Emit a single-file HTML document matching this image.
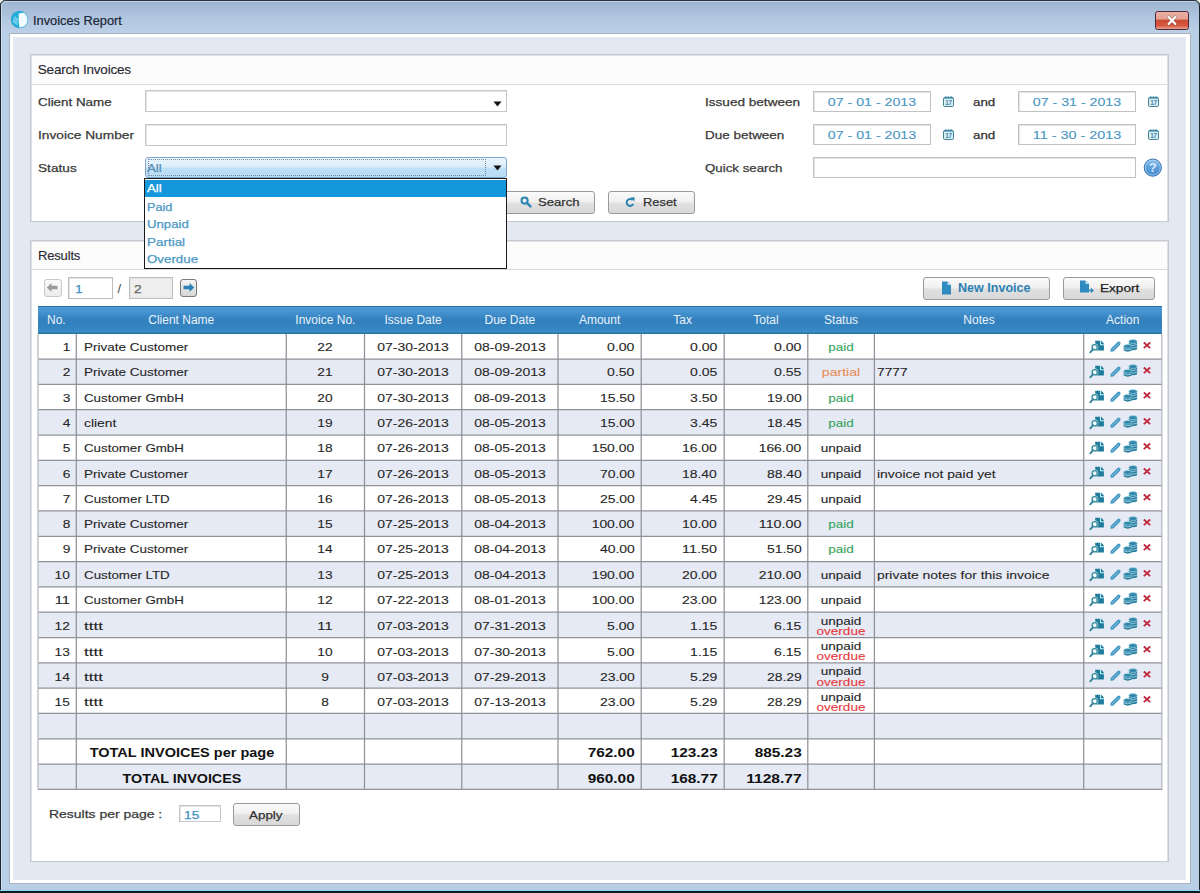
<!DOCTYPE html><html><head><meta charset="utf-8"><style>html,body{margin:0;padding:0;width:1200px;height:893px;overflow:hidden;background:#b9cfe6}body{position:relative;font-family:"Liberation Sans", sans-serif}</style></head><body><div style="position:absolute;left:0;top:0;width:1200px;height:893px;background:#b9cfe6"></div>
<div style="position:absolute;left:0px;top:0px;width:1200px;height:33px;background:linear-gradient(#9cb3cf,#b2c7e0 60%,#bcd0e8)"></div>
<div style="position:absolute;left:0px;top:0px;width:1200px;height:1px;background:#2a3440"></div>
<div style="position:absolute;left:0px;top:0px;width:1px;height:893px;background:#1a2630"></div>
<div style="position:absolute;left:1199px;top:0px;width:1px;height:893px;background:#1a2630"></div>
<div style="position:absolute;left:1px;top:1px;width:1198px;height:1px;background:#dfe8f2;opacity:.6"></div>
<div style="position:absolute;left:1px;top:1px;width:1px;height:891px;background:#dfe8f2;opacity:.6"></div>
<div style="position:absolute;left:0px;top:890px;width:1200px;height:1px;background:#88d5ef"></div>
<div style="position:absolute;left:0px;top:891px;width:1200px;height:2px;background:#0e1c22"></div>
<svg style="position:absolute;left:0;top:0" width="7" height="7" viewBox="0 0 7 7"><path d="M0 0 H5.5 A5.5 5.5 0 0 0 0 5.5Z" fill="#eeeee8"/><path d="M0.5 6 A5.5 5.5 0 0 1 6 0.5" fill="none" stroke="#33404a" stroke-width="1.1"/><path d="M1.6 6.5 A4.6 4.6 0 0 1 6.5 1.6" fill="none" stroke="#d8e2ec" stroke-width=".8"/></svg>
<svg style="position:absolute;left:1193px;top:0" width="7" height="7" viewBox="0 0 7 7"><path d="M7 0 H1.5 A5.5 5.5 0 0 1 7 5.5Z" fill="#eeeee8"/><path d="M1 0.5 A5.5 5.5 0 0 1 6.5 6" fill="none" stroke="#33404a" stroke-width="1.1"/></svg>
<div style="position:absolute;left:1155px;top:11px;width:32px;height:17px;border:1px solid #4a2a34;border-radius:2.5px;background:linear-gradient(#eab0a4,#e6a090 42%,#c94a30 48%,#d55a40 80%,#e9a090)"></div>
<svg style="position:absolute;left:1165px;top:14px" width="14" height="13" viewBox="0 0 14 13"><path d="M3.6 3 L10.4 10 M10.4 3 L3.6 10" stroke="#5a3030" stroke-width="3.4" stroke-linecap="round" opacity=".45"/><path d="M3.6 3 L10.4 10 M10.4 3 L3.6 10" stroke="#fff" stroke-width="2.4" stroke-linecap="round"/></svg>
<svg style="position:absolute;left:10px;top:10px" width="19" height="19" viewBox="0 0 19 19"><defs><clipPath id="ac"><circle cx="9.5" cy="9.5" r="8.1"/></clipPath></defs><circle cx="9.5" cy="9.5" r="8.7" fill="#26aad8"/><path clip-path="url(#ac)" d="M8.8 3.6 Q13 2.6 19 2.5 V19 H9.6 Q8.2 11 8.8 3.6Z" fill="#f2fbff"/><path d="M3.4 8.6 L7.8 12.6 M4.4 6.8 L8.2 10.4 M3.0 10.8 L7.2 14.6" stroke="#a5ecfd" stroke-width="1.2" opacity=".85"/></svg>
<div style="position:absolute;-webkit-text-stroke:0.2px #1b2636;top:14.56px;font-size:12.8px;line-height:12.8px;color:#1b2636;letter-spacing:0.000px;font-weight:normal;white-space:nowrap;left:33px;transform-origin:0 0">Invoices Report</div>
<div style="position:absolute;left:9px;top:33px;width:1182px;height:851px;background:#a9b2be"></div>
<div style="position:absolute;left:10px;top:34px;width:1180px;height:849px;background:#ffffff"></div>
<div style="position:absolute;left:13px;top:37px;width:1173px;height:843px;background:#e3e9f1"></div>
<div style="position:absolute;left:30px;top:54px;width:1139px;height:168px;background:#c6cacf"></div>
<div style="position:absolute;left:31px;top:55px;width:1137px;height:166px;background:#dde0e4"></div>
<div style="position:absolute;left:32px;top:56px;width:1135px;height:165px;background:#ffffff"></div>
<div style="position:absolute;left:32px;top:56px;width:1135px;height:28px;background:#fcfcfc"></div>
<div style="position:absolute;left:32px;top:84px;width:1135px;height:1px;background:#d9dcdf"></div>
<div style="position:absolute;left:30px;top:240px;width:1139px;height:622px;background:#c6cacf"></div>
<div style="position:absolute;left:31px;top:241px;width:1137px;height:620px;background:#dde0e4"></div>
<div style="position:absolute;left:32px;top:242px;width:1135px;height:619px;background:#ffffff"></div>
<div style="position:absolute;left:32px;top:242px;width:1135px;height:27px;background:#fcfcfc"></div>
<div style="position:absolute;left:32px;top:269px;width:1135px;height:1px;background:#d9dcdf"></div>
<div style="position:absolute;-webkit-text-stroke:0.15px #2a2a33;top:63.27px;font-size:13.5px;line-height:13.5px;color:#2a2a33;letter-spacing:-0.200px;font-weight:normal;white-space:nowrap;left:37.8px;transform-origin:0 0">Search Invoices</div>
<div style="position:absolute;-webkit-text-stroke:0.15px #2a2a33;top:248.80px;font-size:13px;line-height:13px;color:#2a2a33;letter-spacing:-0.150px;font-weight:normal;white-space:nowrap;left:37.9px;transform-origin:0 0">Results</div>
<div style="position:absolute;-webkit-text-stroke:0.25px #3a3a3a;top:97.07px;font-size:11.5px;line-height:11.5px;color:#3a3a3a;letter-spacing:0.000px;font-weight:normal;white-space:nowrap;transform:scaleX(1.1643);left:38px;transform-origin:0 0">Client Name</div>
<div style="position:absolute;-webkit-text-stroke:0.25px #3a3a3a;top:130.27px;font-size:11.5px;line-height:11.5px;color:#3a3a3a;letter-spacing:0.000px;font-weight:normal;white-space:nowrap;transform:scaleX(1.1914);left:38px;transform-origin:0 0">Invoice Number</div>
<div style="position:absolute;-webkit-text-stroke:0.25px #3a3a3a;top:162.87px;font-size:11.5px;line-height:11.5px;color:#3a3a3a;letter-spacing:0.000px;font-weight:normal;white-space:nowrap;transform:scaleX(1.1878);left:38px;transform-origin:0 0">Status</div>
<div style="position:absolute;left:145px;top:90px;width:360px;height:20px;border:1px solid #c6c6c6;background:#fff;box-shadow:inset 1px 1px 0 #e4e4e4"></div>
<svg style="position:absolute;left:492.5px;top:100.5px" width="9" height="6" viewBox="0 0 9 6"><path d="M0.5 0.5 H8.5 L4.5 5.5Z" fill="#111"/></svg>
<div style="position:absolute;left:145px;top:124px;width:360px;height:20px;border:1px solid #c6c6c6;background:#fff;box-shadow:inset 1px 1px 0 #e4e4e4"></div>
<div style="position:absolute;left:145px;top:157px;width:360px;height:19px;border:1px solid #7fa6cf;border-radius:3px;background:linear-gradient(#eaf5fd,#dcedfa 45%,#bfe0f6 55%,#b6dcf5)"></div>
<div style="position:absolute;left:148px;top:159px;width:336px;height:15px;border:1px dotted #6d8aa6"></div>
<svg style="position:absolute;left:493.0px;top:165.4px" width="9" height="6" viewBox="0 0 9 6"><path d="M0.5 0.5 H8.5 L4.5 5.5Z" fill="#111"/></svg>
<div style="position:absolute;-webkit-text-stroke:0.25px #5b8fb5;top:163.07px;font-size:11.5px;line-height:11.5px;color:#5b8fb5;letter-spacing:0.000px;font-weight:normal;white-space:nowrap;transform:scaleX(1.1568);left:147.3px;transform-origin:0 0">All</div>
<div style="position:absolute;-webkit-text-stroke:0.25px #3a3a3a;top:97.17px;font-size:11.5px;line-height:11.5px;color:#3a3a3a;letter-spacing:0.000px;font-weight:normal;white-space:nowrap;transform:scaleX(1.1802);left:705.4px;transform-origin:0 0">Issued between</div>
<div style="position:absolute;-webkit-text-stroke:0.25px #3a3a3a;top:130.47px;font-size:11.5px;line-height:11.5px;color:#3a3a3a;letter-spacing:0.000px;font-weight:normal;white-space:nowrap;transform:scaleX(1.1701);left:705.4px;transform-origin:0 0">Due between</div>
<div style="position:absolute;-webkit-text-stroke:0.25px #3a3a3a;top:163.47px;font-size:11.5px;line-height:11.5px;color:#3a3a3a;letter-spacing:0.000px;font-weight:normal;white-space:nowrap;transform:scaleX(1.1548);left:705.4px;transform-origin:0 0">Quick search</div>
<div style="position:absolute;left:813px;top:91px;width:116px;height:19px;border:1px solid #c2c2c2;background:#fff;box-shadow:inset 1px 1px 0 #e4e4e4"></div>
<div style="position:absolute;-webkit-text-stroke:0.1px #4796c2;top:97.47px;font-size:11.5px;line-height:11.5px;color:#4796c2;letter-spacing:0.000px;font-weight:normal;white-space:nowrap;transform:scaleX(1.2331);left:671.50px;width:400px;text-align:center;transform-origin:50% 0">07 - 01 - 2013</div>
<svg style="position:absolute;left:943px;top:96px" width="12" height="12" viewBox="0 0 12 12"><rect x="0.5" y="1.5" width="10" height="9" rx="1.2" fill="#d2f1fb" stroke="#4a7f8e" stroke-width="1"/><rect x="1" y="1" width="9" height="1.6" fill="#4a8aa2"/><circle cx="2.8" cy="1.2" r=".95" fill="#3e86a0"/><circle cx="5.5" cy="1.2" r=".95" fill="#3e86a0"/><circle cx="8.2" cy="1.2" r=".95" fill="#3e86a0"/><text x="5.6" y="9.2" font-size="6.4" font-family="Liberation Sans" font-weight="bold" fill="#52809f" text-anchor="middle" letter-spacing="-.3">17</text></svg>
<div style="position:absolute;-webkit-text-stroke:0.25px #333;top:97.27px;font-size:11.5px;line-height:11.5px;color:#333;letter-spacing:0.000px;font-weight:normal;white-space:nowrap;transform:scaleX(1.1614);left:973px;transform-origin:0 0">and</div>
<div style="position:absolute;left:1018px;top:91px;width:116px;height:19px;border:1px solid #c2c2c2;background:#fff;box-shadow:inset 1px 1px 0 #e4e4e4"></div>
<div style="position:absolute;-webkit-text-stroke:0.1px #4796c2;top:97.47px;font-size:11.5px;line-height:11.5px;color:#4796c2;letter-spacing:0.000px;font-weight:normal;white-space:nowrap;transform:scaleX(1.2331);left:876.50px;width:400px;text-align:center;transform-origin:50% 0">07 - 31 - 2013</div>
<svg style="position:absolute;left:1148px;top:96px" width="12" height="12" viewBox="0 0 12 12"><rect x="0.5" y="1.5" width="10" height="9" rx="1.2" fill="#d2f1fb" stroke="#4a7f8e" stroke-width="1"/><rect x="1" y="1" width="9" height="1.6" fill="#4a8aa2"/><circle cx="2.8" cy="1.2" r=".95" fill="#3e86a0"/><circle cx="5.5" cy="1.2" r=".95" fill="#3e86a0"/><circle cx="8.2" cy="1.2" r=".95" fill="#3e86a0"/><text x="5.6" y="9.2" font-size="6.4" font-family="Liberation Sans" font-weight="bold" fill="#52809f" text-anchor="middle" letter-spacing="-.3">17</text></svg>
<div style="position:absolute;left:813px;top:124px;width:116px;height:19px;border:1px solid #c2c2c2;background:#fff;box-shadow:inset 1px 1px 0 #e4e4e4"></div>
<div style="position:absolute;-webkit-text-stroke:0.1px #4796c2;top:130.47px;font-size:11.5px;line-height:11.5px;color:#4796c2;letter-spacing:0.000px;font-weight:normal;white-space:nowrap;transform:scaleX(1.2331);left:671.50px;width:400px;text-align:center;transform-origin:50% 0">07 - 01 - 2013</div>
<svg style="position:absolute;left:943px;top:129px" width="12" height="12" viewBox="0 0 12 12"><rect x="0.5" y="1.5" width="10" height="9" rx="1.2" fill="#d2f1fb" stroke="#4a7f8e" stroke-width="1"/><rect x="1" y="1" width="9" height="1.6" fill="#4a8aa2"/><circle cx="2.8" cy="1.2" r=".95" fill="#3e86a0"/><circle cx="5.5" cy="1.2" r=".95" fill="#3e86a0"/><circle cx="8.2" cy="1.2" r=".95" fill="#3e86a0"/><text x="5.6" y="9.2" font-size="6.4" font-family="Liberation Sans" font-weight="bold" fill="#52809f" text-anchor="middle" letter-spacing="-.3">17</text></svg>
<div style="position:absolute;-webkit-text-stroke:0.25px #333;top:130.17px;font-size:11.5px;line-height:11.5px;color:#333;letter-spacing:0.000px;font-weight:normal;white-space:nowrap;transform:scaleX(1.1614);left:973px;transform-origin:0 0">and</div>
<div style="position:absolute;left:1018px;top:124px;width:116px;height:19px;border:1px solid #c2c2c2;background:#fff;box-shadow:inset 1px 1px 0 #e4e4e4"></div>
<div style="position:absolute;-webkit-text-stroke:0.1px #4796c2;top:130.47px;font-size:11.5px;line-height:11.5px;color:#4796c2;letter-spacing:0.000px;font-weight:normal;white-space:nowrap;transform:scaleX(1.2480);left:876.50px;width:400px;text-align:center;transform-origin:50% 0">11 - 30 - 2013</div>
<svg style="position:absolute;left:1148px;top:129px" width="12" height="12" viewBox="0 0 12 12"><rect x="0.5" y="1.5" width="10" height="9" rx="1.2" fill="#d2f1fb" stroke="#4a7f8e" stroke-width="1"/><rect x="1" y="1" width="9" height="1.6" fill="#4a8aa2"/><circle cx="2.8" cy="1.2" r=".95" fill="#3e86a0"/><circle cx="5.5" cy="1.2" r=".95" fill="#3e86a0"/><circle cx="8.2" cy="1.2" r=".95" fill="#3e86a0"/><text x="5.6" y="9.2" font-size="6.4" font-family="Liberation Sans" font-weight="bold" fill="#52809f" text-anchor="middle" letter-spacing="-.3">17</text></svg>
<div style="position:absolute;left:813px;top:157px;width:321px;height:19px;border:1px solid #c2c2c2;background:#fff;box-shadow:inset 1px 1px 0 #e4e4e4"></div>
<svg style="position:absolute;left:1143px;top:157.8px" width="20" height="20" viewBox="0 0 20 20"><defs><linearGradient id="hg" x1="0" y1="0" x2="0" y2="1"><stop offset="0" stop-color="#8fc3ee"/><stop offset=".5" stop-color="#5c9fdb"/><stop offset="1" stop-color="#3f86cb"/></linearGradient></defs><circle cx="9.8" cy="9.6" r="8.6" fill="url(#hg)" stroke="#3a6eae" stroke-width="1"/><circle cx="9.8" cy="9.6" r="7.5" fill="none" stroke="#b5dbf6" stroke-width=".8" opacity=".85"/><text x="9.9" y="14.0" font-size="12.5" font-family="Liberation Sans" font-weight="bold" fill="#f6faff" stroke="#8fc0ea" stroke-width=".35" text-anchor="middle">?</text></svg>
<div style="position:absolute;left:504px;top:191px;width:89px;height:21px;border:1px solid #9a9a9a;border-radius:3px;background:linear-gradient(#fbfbfb,#f0f0f0 45%,#e0e0e0 55%,#d8d8d8)"></div>
<div style="position:absolute;left:608px;top:191px;width:85px;height:21px;border:1px solid #9a9a9a;border-radius:3px;background:linear-gradient(#fbfbfb,#f0f0f0 45%,#e0e0e0 55%,#d8d8d8)"></div>
<svg style="position:absolute;left:520px;top:196px" width="12" height="12" viewBox="0 0 12 12"><circle cx="4.6" cy="4.6" r="3.1" fill="none" stroke="#2a86b0" stroke-width="2"/><path d="M6.8 6.8 L10.4 10.4" stroke="#2a86b0" stroke-width="2.4" stroke-linecap="round"/></svg>
<div style="position:absolute;-webkit-text-stroke:0.25px #333;top:196.57px;font-size:11.5px;line-height:11.5px;color:#333;letter-spacing:0.000px;font-weight:normal;white-space:nowrap;transform:scaleX(1.1401);left:537.6px;transform-origin:0 0">Search</div>
<svg style="position:absolute;left:625px;top:196px" width="11" height="12" viewBox="0 0 11 12"><path d="M7.6 4.2 A3.4 3.4 0 1 0 8.2 7.8" fill="none" stroke="#2a86b0" stroke-width="2"/><path d="M5.4 1.6 L9.6 1.2 L9.4 5.6Z" fill="#2a86b0"/></svg>
<div style="position:absolute;-webkit-text-stroke:0.25px #333;top:196.57px;font-size:11.5px;line-height:11.5px;color:#333;letter-spacing:0.000px;font-weight:normal;white-space:nowrap;transform:scaleX(1.1192);left:642.6px;transform-origin:0 0">Reset</div>
<div style="position:absolute;left:44px;top:279px;width:16px;height:16px;border:1px solid #c8c8c8;border-radius:3px;background:linear-gradient(#fafafa,#ececec)"></div>
<svg style="position:absolute;left:46px;top:282px" width="13" height="11" viewBox="0 0 13 11"><path d="M0.8 5.5 L5.5 1 V3.8 H11.5 V7.2 H5.5 V10Z" fill="#9a9a9a"/></svg>
<div style="position:absolute;left:68px;top:277px;width:43px;height:20px;border:1px solid #bdbdbd;background:#fff;box-shadow:inset 1px 1px 0 #e4e4e4"></div>
<div style="position:absolute;-webkit-text-stroke:0.25px #3f91bf;top:283.57px;font-size:11.5px;line-height:11.5px;color:#3f91bf;letter-spacing:0.000px;font-weight:normal;white-space:nowrap;transform:scaleX(1.1933);left:74.5px;transform-origin:0 0">1</div>
<div style="position:absolute;-webkit-text-stroke:0px #444;top:281.50px;font-size:13px;line-height:13px;color:#444;letter-spacing:0.000px;font-weight:normal;white-space:nowrap;left:117.5px;transform-origin:0 0">/</div>
<div style="position:absolute;left:129px;top:277px;width:42px;height:20px;border:1px solid #bdbdbd;background:#eeeeee;box-shadow:inset 1px 1px 0 #e4e4e4"></div>
<div style="position:absolute;-webkit-text-stroke:0.25px #666;top:283.57px;font-size:11.5px;line-height:11.5px;color:#666;letter-spacing:0.000px;font-weight:normal;white-space:nowrap;transform:scaleX(1.1933);left:134px;transform-origin:0 0">2</div>
<div style="position:absolute;left:180px;top:279px;width:15px;height:16px;border:1px solid #7a7a7a;border-radius:3px;background:linear-gradient(#f4f4f4,#d6d6d6)"></div>
<svg style="position:absolute;left:182px;top:282px" width="13" height="11" viewBox="0 0 13 11"><path d="M12.2 5.5 L7.5 1 V3.8 H1.5 V7.2 H7.5 V10Z" fill="#2b80b6"/></svg>
<div style="position:absolute;left:923px;top:277px;width:125px;height:21px;border:1px solid #9a9a9a;border-radius:3px;background:linear-gradient(#fbfbfb,#f0f0f0 45%,#e0e0e0 55%,#d8d8d8)"></div>
<div style="position:absolute;left:1063px;top:277px;width:90px;height:21px;border:1px solid #9a9a9a;border-radius:3px;background:linear-gradient(#fbfbfb,#f0f0f0 45%,#e0e0e0 55%,#d8d8d8)"></div>
<svg style="position:absolute;left:941px;top:281px" width="11" height="14" viewBox="0 0 11 14"><path d="M1 0.5 H6.5 L10 4 V13.5 H1Z" fill="#2f8ac0"/><path d="M6.5 0.5 V4 H10" fill="#bfe0f2"/></svg>
<div style="position:absolute;-webkit-text-stroke:0px #2a80b4;top:282.14px;font-size:12px;line-height:12px;color:#2a80b4;letter-spacing:0.000px;font-weight:bold;white-space:nowrap;transform:scaleX(1.045);left:957.5px;transform-origin:0 0">New Invoice</div>
<svg style="position:absolute;left:1079px;top:280px" width="16" height="15" viewBox="0 0 16 15"><path d="M1 0.5 H6.5 L10 4 V12.5 H1Z" fill="#2f8ac0"/><path d="M6.5 0.5 V4 H10" fill="#bfe0f2"/><path d="M9 10.5 H13.5 M11.8 8.6 L14 10.5 L11.8 12.4" stroke="#2f8ac0" stroke-width="1.3" fill="none"/></svg>
<div style="position:absolute;-webkit-text-stroke:0.25px #222;top:282.57px;font-size:11.5px;line-height:11.5px;color:#222;letter-spacing:0.000px;font-weight:normal;white-space:nowrap;transform:scaleX(1.1824);left:1100px;transform-origin:0 0">Export</div>
<div style="position:absolute;left:38px;top:306px;width:1123.80px;height:28px;background:linear-gradient(#2d7099 0px,#2d7099 1px,#4b9ad5 1.5px,#4593d0 6px,#327fbc 14px,#3585c3 22px,#3a8ecb 26px,#2d7299 27px,#2d7299 28px)"></div>
<div style="position:absolute;-webkit-text-stroke:0px #e9f3fb;top:314.04px;font-size:12px;line-height:12px;color:#e9f3fb;letter-spacing:0.000px;font-weight:normal;white-space:nowrap;left:47.0px;transform-origin:0 0">No.</div>
<div style="position:absolute;-webkit-text-stroke:0px #e9f3fb;top:314.04px;font-size:12px;line-height:12px;color:#e9f3fb;letter-spacing:0.000px;font-weight:normal;white-space:nowrap;left:-18.72px;width:400px;text-align:center;transform-origin:50% 0">Client Name</div>
<div style="position:absolute;-webkit-text-stroke:0px #e9f3fb;top:314.04px;font-size:12px;line-height:12px;color:#e9f3fb;letter-spacing:0.000px;font-weight:normal;white-space:nowrap;left:125.38px;width:400px;text-align:center;transform-origin:50% 0">Invoice No.</div>
<div style="position:absolute;-webkit-text-stroke:0px #e9f3fb;top:314.04px;font-size:12px;line-height:12px;color:#e9f3fb;letter-spacing:0.000px;font-weight:normal;white-space:nowrap;left:213.12px;width:400px;text-align:center;transform-origin:50% 0">Issue Date</div>
<div style="position:absolute;-webkit-text-stroke:0px #e9f3fb;top:314.04px;font-size:12px;line-height:12px;color:#e9f3fb;letter-spacing:0.000px;font-weight:normal;white-space:nowrap;left:309.88px;width:400px;text-align:center;transform-origin:50% 0">Due Date</div>
<div style="position:absolute;-webkit-text-stroke:0px #e9f3fb;top:314.04px;font-size:12px;line-height:12px;color:#e9f3fb;letter-spacing:0.000px;font-weight:normal;white-space:nowrap;left:399.60px;width:400px;text-align:center;transform-origin:50% 0">Amount</div>
<div style="position:absolute;-webkit-text-stroke:0px #e9f3fb;top:314.04px;font-size:12px;line-height:12px;color:#e9f3fb;letter-spacing:0.000px;font-weight:normal;white-space:nowrap;left:482.70px;width:400px;text-align:center;transform-origin:50% 0">Tax</div>
<div style="position:absolute;-webkit-text-stroke:0px #e9f3fb;top:314.04px;font-size:12px;line-height:12px;color:#e9f3fb;letter-spacing:0.000px;font-weight:normal;white-space:nowrap;left:566.00px;width:400px;text-align:center;transform-origin:50% 0">Total</div>
<div style="position:absolute;-webkit-text-stroke:0px #e9f3fb;top:314.04px;font-size:12px;line-height:12px;color:#e9f3fb;letter-spacing:0.000px;font-weight:normal;white-space:nowrap;left:641.10px;width:400px;text-align:center;transform-origin:50% 0">Status</div>
<div style="position:absolute;-webkit-text-stroke:0px #e9f3fb;top:314.04px;font-size:12px;line-height:12px;color:#e9f3fb;letter-spacing:0.000px;font-weight:normal;white-space:nowrap;left:779.05px;width:400px;text-align:center;transform-origin:50% 0">Notes</div>
<div style="position:absolute;-webkit-text-stroke:0px #e9f3fb;top:314.04px;font-size:12px;line-height:12px;color:#e9f3fb;letter-spacing:0.000px;font-weight:normal;white-space:nowrap;left:922.75px;width:400px;text-align:center;transform-origin:50% 0">Action</div>
<div style="position:absolute;left:38px;top:333.80px;width:1123.80px;height:25.312px;background:#ffffff"></div>
<div style="position:absolute;left:38px;top:359.11px;width:1123.80px;height:25.312px;background:#e6eaf5"></div>
<div style="position:absolute;left:38px;top:384.43px;width:1123.80px;height:25.312px;background:#ffffff"></div>
<div style="position:absolute;left:38px;top:409.74px;width:1123.80px;height:25.312px;background:#e6eaf5"></div>
<div style="position:absolute;left:38px;top:435.05px;width:1123.80px;height:25.312px;background:#ffffff"></div>
<div style="position:absolute;left:38px;top:460.36px;width:1123.80px;height:25.312px;background:#e6eaf5"></div>
<div style="position:absolute;left:38px;top:485.68px;width:1123.80px;height:25.312px;background:#ffffff"></div>
<div style="position:absolute;left:38px;top:510.99px;width:1123.80px;height:25.312px;background:#e6eaf5"></div>
<div style="position:absolute;left:38px;top:536.30px;width:1123.80px;height:25.312px;background:#ffffff"></div>
<div style="position:absolute;left:38px;top:561.61px;width:1123.80px;height:25.312px;background:#e6eaf5"></div>
<div style="position:absolute;left:38px;top:586.92px;width:1123.80px;height:25.312px;background:#ffffff"></div>
<div style="position:absolute;left:38px;top:612.24px;width:1123.80px;height:25.312px;background:#e6eaf5"></div>
<div style="position:absolute;left:38px;top:637.55px;width:1123.80px;height:25.312px;background:#ffffff"></div>
<div style="position:absolute;left:38px;top:662.86px;width:1123.80px;height:25.312px;background:#e6eaf5"></div>
<div style="position:absolute;left:38px;top:688.17px;width:1123.80px;height:25.312px;background:#ffffff"></div>
<div style="position:absolute;left:38px;top:713.49px;width:1123.80px;height:25.312px;background:#e6eaf5"></div>
<div style="position:absolute;left:38px;top:738.80px;width:1123.80px;height:25.312px;background:#ffffff"></div>
<div style="position:absolute;left:38px;top:764.11px;width:1123.80px;height:25.312px;background:#e6eaf5"></div>
<svg style="position:absolute;left:0;top:0" width="1200" height="893" viewBox="0 0 1200 893"><line x1="38" y1="359.113" x2="1162.3" y2="359.113" stroke="#909298" stroke-width="1.25"/><line x1="38" y1="384.425" x2="1162.3" y2="384.425" stroke="#909298" stroke-width="1.25"/><line x1="38" y1="409.738" x2="1162.3" y2="409.738" stroke="#909298" stroke-width="1.25"/><line x1="38" y1="435.050" x2="1162.3" y2="435.050" stroke="#909298" stroke-width="1.25"/><line x1="38" y1="460.363" x2="1162.3" y2="460.363" stroke="#909298" stroke-width="1.25"/><line x1="38" y1="485.675" x2="1162.3" y2="485.675" stroke="#909298" stroke-width="1.25"/><line x1="38" y1="510.988" x2="1162.3" y2="510.988" stroke="#909298" stroke-width="1.25"/><line x1="38" y1="536.300" x2="1162.3" y2="536.300" stroke="#909298" stroke-width="1.25"/><line x1="38" y1="561.612" x2="1162.3" y2="561.612" stroke="#909298" stroke-width="1.25"/><line x1="38" y1="586.925" x2="1162.3" y2="586.925" stroke="#909298" stroke-width="1.25"/><line x1="38" y1="612.237" x2="1162.3" y2="612.237" stroke="#909298" stroke-width="1.25"/><line x1="38" y1="637.550" x2="1162.3" y2="637.550" stroke="#909298" stroke-width="1.25"/><line x1="38" y1="662.862" x2="1162.3" y2="662.862" stroke="#909298" stroke-width="1.25"/><line x1="38" y1="688.175" x2="1162.3" y2="688.175" stroke="#909298" stroke-width="1.25"/><line x1="38" y1="713.487" x2="1162.3" y2="713.487" stroke="#909298" stroke-width="1.25"/><line x1="38" y1="738.800" x2="1162.3" y2="738.800" stroke="#909298" stroke-width="1.25"/><line x1="38" y1="764.112" x2="1162.3" y2="764.112" stroke="#909298" stroke-width="1.25"/><line x1="38" y1="789.425" x2="1162.3" y2="789.425" stroke="#909298" stroke-width="1.25"/><line x1="38.000" y1="333.8" x2="38.000" y2="789.425" stroke="#b4b8be" stroke-width="1.25"/><line x1="76.300" y1="333.8" x2="76.300" y2="789.425" stroke="#909298" stroke-width="1.25"/><line x1="286.250" y1="333.8" x2="286.250" y2="789.425" stroke="#909298" stroke-width="1.25"/><line x1="364.500" y1="333.8" x2="364.500" y2="789.425" stroke="#909298" stroke-width="1.25"/><line x1="461.750" y1="333.8" x2="461.750" y2="789.425" stroke="#909298" stroke-width="1.25"/><line x1="558.000" y1="333.8" x2="558.000" y2="789.425" stroke="#909298" stroke-width="1.25"/><line x1="641.200" y1="333.8" x2="641.200" y2="789.425" stroke="#909298" stroke-width="1.25"/><line x1="724.200" y1="333.8" x2="724.200" y2="789.425" stroke="#909298" stroke-width="1.25"/><line x1="807.800" y1="333.8" x2="807.800" y2="789.425" stroke="#909298" stroke-width="1.25"/><line x1="874.400" y1="333.8" x2="874.400" y2="789.425" stroke="#909298" stroke-width="1.25"/><line x1="1083.700" y1="333.8" x2="1083.700" y2="789.425" stroke="#909298" stroke-width="1.25"/><line x1="1161.800" y1="333.8" x2="1161.800" y2="789.425" stroke="#b4b8be" stroke-width="1.25"/></svg>
<div style="position:absolute;-webkit-text-stroke:0.1px #262626;top:341.97px;font-size:11.5px;line-height:11.5px;color:#262626;letter-spacing:0.000px;font-weight:normal;white-space:nowrap;transform:scaleX(1.1933);right:1130.00px;transform-origin:100% 0">1</div>
<div style="position:absolute;-webkit-text-stroke:0.1px #262626;top:341.97px;font-size:11.5px;line-height:11.5px;color:#262626;letter-spacing:0.000px;font-weight:normal;white-space:nowrap;transform:scaleX(1.1736);left:83.7px;transform-origin:0 0">Private Customer</div>
<div style="position:absolute;-webkit-text-stroke:0.1px #262626;top:341.97px;font-size:11.5px;line-height:11.5px;color:#262626;letter-spacing:0.000px;font-weight:normal;white-space:nowrap;transform:scaleX(1.1933);left:125.38px;width:400px;text-align:center;transform-origin:50% 0">22</div>
<div style="position:absolute;-webkit-text-stroke:0.1px #262626;top:341.97px;font-size:11.5px;line-height:11.5px;color:#262626;letter-spacing:0.000px;font-weight:normal;white-space:nowrap;transform:scaleX(1.2138);left:213.12px;width:400px;text-align:center;transform-origin:50% 0">07-30-2013</div>
<div style="position:absolute;-webkit-text-stroke:0.1px #262626;top:341.97px;font-size:11.5px;line-height:11.5px;color:#262626;letter-spacing:0.000px;font-weight:normal;white-space:nowrap;transform:scaleX(1.2138);left:309.88px;width:400px;text-align:center;transform-origin:50% 0">08-09-2013</div>
<div style="position:absolute;-webkit-text-stroke:0.1px #262626;top:341.97px;font-size:11.5px;line-height:11.5px;color:#262626;letter-spacing:0.000px;font-weight:normal;white-space:nowrap;transform:scaleX(1.2181);right:565.60px;transform-origin:100% 0">0.00</div>
<div style="position:absolute;-webkit-text-stroke:0.1px #262626;top:341.97px;font-size:11.5px;line-height:11.5px;color:#262626;letter-spacing:0.000px;font-weight:normal;white-space:nowrap;transform:scaleX(1.2181);right:482.80px;transform-origin:100% 0">0.00</div>
<div style="position:absolute;-webkit-text-stroke:0.1px #262626;top:341.97px;font-size:11.5px;line-height:11.5px;color:#262626;letter-spacing:0.000px;font-weight:normal;white-space:nowrap;transform:scaleX(1.2181);right:398.50px;transform-origin:100% 0">0.00</div>
<div style="position:absolute;-webkit-text-stroke:0.1px #33a35a;top:341.97px;font-size:11.5px;line-height:11.5px;color:#33a35a;letter-spacing:0.000px;font-weight:normal;white-space:nowrap;transform:scaleX(1.1706);left:641.10px;width:400px;text-align:center;transform-origin:50% 0">paid</div>
<svg style="position:absolute;left:1085px;top:333.800px" width="70" height="25" viewBox="0 0 70 25"><path d="M10.2 6.8 H16.2 L18.9 9.5 V16.6 H10.2Z" fill="#1f7b9a"/><path d="M15.5 6.6 V10.8 H19.2" stroke="#c4eef9" stroke-width="1.05" fill="none"/><circle cx="9.7" cy="13.2" r="3.6" fill="#d8f4fb"/><circle cx="9.7" cy="13.2" r="2.6" fill="#f4fbfd" stroke="#3b8a9c" stroke-width="1.3"/><path d="M7.9 15.3 L5.3 18.4" stroke="#2f7f96" stroke-width="1.8" stroke-linecap="round"/><path d="M25.3 17.8 L25.8 14.8 L32.4 8.2 Q33.8 7 35.0 8.3 Q36.1 9.6 34.9 10.9 L28.3 17.4Z" fill="#4296c2"/><path d="M27 16.2 L33.8 9.4" stroke="#9fd3ea" stroke-width=".8"/><path d="M43.9 7.8 V15.3 Q48 17.3 52.1 15.3 V7.8Z" fill="#2a7b9c"/><path d="M43.9 10.6 Q48 12.4 52.1 10.6 M43.9 13.2 Q48 15 52.1 13.2" stroke="#a6dcee" stroke-width=".8" fill="none"/><ellipse cx="48" cy="7.6" rx="4.1" ry="2" fill="#2f86a8" stroke="#a6dcee" stroke-width=".6"/><path d="M38.7 12.4 V16.6 Q42.7 18.8 46.8 16.6 V12.4Z" fill="#2a7b9c"/><path d="M38.7 14.8 Q42.7 16.8 46.8 14.8" stroke="#a6dcee" stroke-width=".8" fill="none"/><ellipse cx="42.75" cy="12.3" rx="4.1" ry="1.9" fill="#2f86a8" stroke="#a6dcee" stroke-width=".6"/><path d="M58.8 8.5 L65.2 14.2 M65.2 8.5 L58.8 14.2" stroke="#c0283e" stroke-width="1.8"/></svg>
<div style="position:absolute;-webkit-text-stroke:0.1px #262626;top:367.28px;font-size:11.5px;line-height:11.5px;color:#262626;letter-spacing:0.000px;font-weight:normal;white-space:nowrap;transform:scaleX(1.1933);right:1130.00px;transform-origin:100% 0">2</div>
<div style="position:absolute;-webkit-text-stroke:0.1px #262626;top:367.28px;font-size:11.5px;line-height:11.5px;color:#262626;letter-spacing:0.000px;font-weight:normal;white-space:nowrap;transform:scaleX(1.1736);left:83.7px;transform-origin:0 0">Private Customer</div>
<div style="position:absolute;-webkit-text-stroke:0.1px #262626;top:367.28px;font-size:11.5px;line-height:11.5px;color:#262626;letter-spacing:0.000px;font-weight:normal;white-space:nowrap;transform:scaleX(1.1933);left:125.38px;width:400px;text-align:center;transform-origin:50% 0">21</div>
<div style="position:absolute;-webkit-text-stroke:0.1px #262626;top:367.28px;font-size:11.5px;line-height:11.5px;color:#262626;letter-spacing:0.000px;font-weight:normal;white-space:nowrap;transform:scaleX(1.2138);left:213.12px;width:400px;text-align:center;transform-origin:50% 0">07-30-2013</div>
<div style="position:absolute;-webkit-text-stroke:0.1px #262626;top:367.28px;font-size:11.5px;line-height:11.5px;color:#262626;letter-spacing:0.000px;font-weight:normal;white-space:nowrap;transform:scaleX(1.2138);left:309.88px;width:400px;text-align:center;transform-origin:50% 0">08-09-2013</div>
<div style="position:absolute;-webkit-text-stroke:0.1px #262626;top:367.28px;font-size:11.5px;line-height:11.5px;color:#262626;letter-spacing:0.000px;font-weight:normal;white-space:nowrap;transform:scaleX(1.2181);right:565.60px;transform-origin:100% 0">0.50</div>
<div style="position:absolute;-webkit-text-stroke:0.1px #262626;top:367.28px;font-size:11.5px;line-height:11.5px;color:#262626;letter-spacing:0.000px;font-weight:normal;white-space:nowrap;transform:scaleX(1.2181);right:482.80px;transform-origin:100% 0">0.05</div>
<div style="position:absolute;-webkit-text-stroke:0.1px #262626;top:367.28px;font-size:11.5px;line-height:11.5px;color:#262626;letter-spacing:0.000px;font-weight:normal;white-space:nowrap;transform:scaleX(1.2181);right:398.50px;transform-origin:100% 0">0.55</div>
<div style="position:absolute;-webkit-text-stroke:0.1px #e98c55;top:367.28px;font-size:11.5px;line-height:11.5px;color:#e98c55;letter-spacing:0.000px;font-weight:normal;white-space:nowrap;transform:scaleX(1.2237);left:641.10px;width:400px;text-align:center;transform-origin:50% 0">partial</div>
<div style="position:absolute;-webkit-text-stroke:0.1px #262626;top:367.28px;font-size:11.5px;line-height:11.5px;color:#262626;letter-spacing:0.000px;font-weight:normal;white-space:nowrap;transform:scaleX(1.1933);left:877.3px;transform-origin:0 0">7777</div>
<svg style="position:absolute;left:1085px;top:359.113px" width="70" height="25" viewBox="0 0 70 25"><path d="M10.2 6.8 H16.2 L18.9 9.5 V16.6 H10.2Z" fill="#1f7b9a"/><path d="M15.5 6.6 V10.8 H19.2" stroke="#c4eef9" stroke-width="1.05" fill="none"/><circle cx="9.7" cy="13.2" r="3.6" fill="#d8f4fb"/><circle cx="9.7" cy="13.2" r="2.6" fill="#f4fbfd" stroke="#3b8a9c" stroke-width="1.3"/><path d="M7.9 15.3 L5.3 18.4" stroke="#2f7f96" stroke-width="1.8" stroke-linecap="round"/><path d="M25.3 17.8 L25.8 14.8 L32.4 8.2 Q33.8 7 35.0 8.3 Q36.1 9.6 34.9 10.9 L28.3 17.4Z" fill="#4296c2"/><path d="M27 16.2 L33.8 9.4" stroke="#9fd3ea" stroke-width=".8"/><path d="M43.9 7.8 V15.3 Q48 17.3 52.1 15.3 V7.8Z" fill="#2a7b9c"/><path d="M43.9 10.6 Q48 12.4 52.1 10.6 M43.9 13.2 Q48 15 52.1 13.2" stroke="#a6dcee" stroke-width=".8" fill="none"/><ellipse cx="48" cy="7.6" rx="4.1" ry="2" fill="#2f86a8" stroke="#a6dcee" stroke-width=".6"/><path d="M38.7 12.4 V16.6 Q42.7 18.8 46.8 16.6 V12.4Z" fill="#2a7b9c"/><path d="M38.7 14.8 Q42.7 16.8 46.8 14.8" stroke="#a6dcee" stroke-width=".8" fill="none"/><ellipse cx="42.75" cy="12.3" rx="4.1" ry="1.9" fill="#2f86a8" stroke="#a6dcee" stroke-width=".6"/><path d="M58.8 8.5 L65.2 14.2 M65.2 8.5 L58.8 14.2" stroke="#c0283e" stroke-width="1.8"/></svg>
<div style="position:absolute;-webkit-text-stroke:0.1px #262626;top:392.59px;font-size:11.5px;line-height:11.5px;color:#262626;letter-spacing:0.000px;font-weight:normal;white-space:nowrap;transform:scaleX(1.1933);right:1130.00px;transform-origin:100% 0">3</div>
<div style="position:absolute;-webkit-text-stroke:0.1px #262626;top:392.59px;font-size:11.5px;line-height:11.5px;color:#262626;letter-spacing:0.000px;font-weight:normal;white-space:nowrap;transform:scaleX(1.1578);left:83.7px;transform-origin:0 0">Customer GmbH</div>
<div style="position:absolute;-webkit-text-stroke:0.1px #262626;top:392.59px;font-size:11.5px;line-height:11.5px;color:#262626;letter-spacing:0.000px;font-weight:normal;white-space:nowrap;transform:scaleX(1.1933);left:125.38px;width:400px;text-align:center;transform-origin:50% 0">20</div>
<div style="position:absolute;-webkit-text-stroke:0.1px #262626;top:392.59px;font-size:11.5px;line-height:11.5px;color:#262626;letter-spacing:0.000px;font-weight:normal;white-space:nowrap;transform:scaleX(1.2138);left:213.12px;width:400px;text-align:center;transform-origin:50% 0">07-30-2013</div>
<div style="position:absolute;-webkit-text-stroke:0.1px #262626;top:392.59px;font-size:11.5px;line-height:11.5px;color:#262626;letter-spacing:0.000px;font-weight:normal;white-space:nowrap;transform:scaleX(1.2138);left:309.88px;width:400px;text-align:center;transform-origin:50% 0">08-09-2013</div>
<div style="position:absolute;-webkit-text-stroke:0.1px #262626;top:392.59px;font-size:11.5px;line-height:11.5px;color:#262626;letter-spacing:0.000px;font-weight:normal;white-space:nowrap;transform:scaleX(1.2126);right:565.60px;transform-origin:100% 0">15.50</div>
<div style="position:absolute;-webkit-text-stroke:0.1px #262626;top:392.59px;font-size:11.5px;line-height:11.5px;color:#262626;letter-spacing:0.000px;font-weight:normal;white-space:nowrap;transform:scaleX(1.2181);right:482.80px;transform-origin:100% 0">3.50</div>
<div style="position:absolute;-webkit-text-stroke:0.1px #262626;top:392.59px;font-size:11.5px;line-height:11.5px;color:#262626;letter-spacing:0.000px;font-weight:normal;white-space:nowrap;transform:scaleX(1.2126);right:398.50px;transform-origin:100% 0">19.00</div>
<div style="position:absolute;-webkit-text-stroke:0.1px #33a35a;top:392.59px;font-size:11.5px;line-height:11.5px;color:#33a35a;letter-spacing:0.000px;font-weight:normal;white-space:nowrap;transform:scaleX(1.1706);left:641.10px;width:400px;text-align:center;transform-origin:50% 0">paid</div>
<svg style="position:absolute;left:1085px;top:384.425px" width="70" height="25" viewBox="0 0 70 25"><path d="M10.2 6.8 H16.2 L18.9 9.5 V16.6 H10.2Z" fill="#1f7b9a"/><path d="M15.5 6.6 V10.8 H19.2" stroke="#c4eef9" stroke-width="1.05" fill="none"/><circle cx="9.7" cy="13.2" r="3.6" fill="#d8f4fb"/><circle cx="9.7" cy="13.2" r="2.6" fill="#f4fbfd" stroke="#3b8a9c" stroke-width="1.3"/><path d="M7.9 15.3 L5.3 18.4" stroke="#2f7f96" stroke-width="1.8" stroke-linecap="round"/><path d="M25.3 17.8 L25.8 14.8 L32.4 8.2 Q33.8 7 35.0 8.3 Q36.1 9.6 34.9 10.9 L28.3 17.4Z" fill="#4296c2"/><path d="M27 16.2 L33.8 9.4" stroke="#9fd3ea" stroke-width=".8"/><path d="M43.9 7.8 V15.3 Q48 17.3 52.1 15.3 V7.8Z" fill="#2a7b9c"/><path d="M43.9 10.6 Q48 12.4 52.1 10.6 M43.9 13.2 Q48 15 52.1 13.2" stroke="#a6dcee" stroke-width=".8" fill="none"/><ellipse cx="48" cy="7.6" rx="4.1" ry="2" fill="#2f86a8" stroke="#a6dcee" stroke-width=".6"/><path d="M38.7 12.4 V16.6 Q42.7 18.8 46.8 16.6 V12.4Z" fill="#2a7b9c"/><path d="M38.7 14.8 Q42.7 16.8 46.8 14.8" stroke="#a6dcee" stroke-width=".8" fill="none"/><ellipse cx="42.75" cy="12.3" rx="4.1" ry="1.9" fill="#2f86a8" stroke="#a6dcee" stroke-width=".6"/><path d="M58.8 8.5 L65.2 14.2 M65.2 8.5 L58.8 14.2" stroke="#c0283e" stroke-width="1.8"/></svg>
<div style="position:absolute;-webkit-text-stroke:0.1px #262626;top:417.90px;font-size:11.5px;line-height:11.5px;color:#262626;letter-spacing:0.000px;font-weight:normal;white-space:nowrap;transform:scaleX(1.1933);right:1130.00px;transform-origin:100% 0">4</div>
<div style="position:absolute;-webkit-text-stroke:0.1px #262626;top:417.90px;font-size:11.5px;line-height:11.5px;color:#262626;letter-spacing:0.000px;font-weight:normal;white-space:nowrap;transform:scaleX(1.2033);left:83.7px;transform-origin:0 0">client</div>
<div style="position:absolute;-webkit-text-stroke:0.1px #262626;top:417.90px;font-size:11.5px;line-height:11.5px;color:#262626;letter-spacing:0.000px;font-weight:normal;white-space:nowrap;transform:scaleX(1.1933);left:125.38px;width:400px;text-align:center;transform-origin:50% 0">19</div>
<div style="position:absolute;-webkit-text-stroke:0.1px #262626;top:417.90px;font-size:11.5px;line-height:11.5px;color:#262626;letter-spacing:0.000px;font-weight:normal;white-space:nowrap;transform:scaleX(1.2138);left:213.12px;width:400px;text-align:center;transform-origin:50% 0">07-26-2013</div>
<div style="position:absolute;-webkit-text-stroke:0.1px #262626;top:417.90px;font-size:11.5px;line-height:11.5px;color:#262626;letter-spacing:0.000px;font-weight:normal;white-space:nowrap;transform:scaleX(1.2138);left:309.88px;width:400px;text-align:center;transform-origin:50% 0">08-05-2013</div>
<div style="position:absolute;-webkit-text-stroke:0.1px #262626;top:417.90px;font-size:11.5px;line-height:11.5px;color:#262626;letter-spacing:0.000px;font-weight:normal;white-space:nowrap;transform:scaleX(1.2126);right:565.60px;transform-origin:100% 0">15.00</div>
<div style="position:absolute;-webkit-text-stroke:0.1px #262626;top:417.90px;font-size:11.5px;line-height:11.5px;color:#262626;letter-spacing:0.000px;font-weight:normal;white-space:nowrap;transform:scaleX(1.2181);right:482.80px;transform-origin:100% 0">3.45</div>
<div style="position:absolute;-webkit-text-stroke:0.1px #262626;top:417.90px;font-size:11.5px;line-height:11.5px;color:#262626;letter-spacing:0.000px;font-weight:normal;white-space:nowrap;transform:scaleX(1.2126);right:398.50px;transform-origin:100% 0">18.45</div>
<div style="position:absolute;-webkit-text-stroke:0.1px #33a35a;top:417.90px;font-size:11.5px;line-height:11.5px;color:#33a35a;letter-spacing:0.000px;font-weight:normal;white-space:nowrap;transform:scaleX(1.1706);left:641.10px;width:400px;text-align:center;transform-origin:50% 0">paid</div>
<svg style="position:absolute;left:1085px;top:409.738px" width="70" height="25" viewBox="0 0 70 25"><path d="M10.2 6.8 H16.2 L18.9 9.5 V16.6 H10.2Z" fill="#1f7b9a"/><path d="M15.5 6.6 V10.8 H19.2" stroke="#c4eef9" stroke-width="1.05" fill="none"/><circle cx="9.7" cy="13.2" r="3.6" fill="#d8f4fb"/><circle cx="9.7" cy="13.2" r="2.6" fill="#f4fbfd" stroke="#3b8a9c" stroke-width="1.3"/><path d="M7.9 15.3 L5.3 18.4" stroke="#2f7f96" stroke-width="1.8" stroke-linecap="round"/><path d="M25.3 17.8 L25.8 14.8 L32.4 8.2 Q33.8 7 35.0 8.3 Q36.1 9.6 34.9 10.9 L28.3 17.4Z" fill="#4296c2"/><path d="M27 16.2 L33.8 9.4" stroke="#9fd3ea" stroke-width=".8"/><path d="M43.9 7.8 V15.3 Q48 17.3 52.1 15.3 V7.8Z" fill="#2a7b9c"/><path d="M43.9 10.6 Q48 12.4 52.1 10.6 M43.9 13.2 Q48 15 52.1 13.2" stroke="#a6dcee" stroke-width=".8" fill="none"/><ellipse cx="48" cy="7.6" rx="4.1" ry="2" fill="#2f86a8" stroke="#a6dcee" stroke-width=".6"/><path d="M38.7 12.4 V16.6 Q42.7 18.8 46.8 16.6 V12.4Z" fill="#2a7b9c"/><path d="M38.7 14.8 Q42.7 16.8 46.8 14.8" stroke="#a6dcee" stroke-width=".8" fill="none"/><ellipse cx="42.75" cy="12.3" rx="4.1" ry="1.9" fill="#2f86a8" stroke="#a6dcee" stroke-width=".6"/><path d="M58.8 8.5 L65.2 14.2 M65.2 8.5 L58.8 14.2" stroke="#c0283e" stroke-width="1.8"/></svg>
<div style="position:absolute;-webkit-text-stroke:0.1px #262626;top:443.22px;font-size:11.5px;line-height:11.5px;color:#262626;letter-spacing:0.000px;font-weight:normal;white-space:nowrap;transform:scaleX(1.1933);right:1130.00px;transform-origin:100% 0">5</div>
<div style="position:absolute;-webkit-text-stroke:0.1px #262626;top:443.22px;font-size:11.5px;line-height:11.5px;color:#262626;letter-spacing:0.000px;font-weight:normal;white-space:nowrap;transform:scaleX(1.1578);left:83.7px;transform-origin:0 0">Customer GmbH</div>
<div style="position:absolute;-webkit-text-stroke:0.1px #262626;top:443.22px;font-size:11.5px;line-height:11.5px;color:#262626;letter-spacing:0.000px;font-weight:normal;white-space:nowrap;transform:scaleX(1.1933);left:125.38px;width:400px;text-align:center;transform-origin:50% 0">18</div>
<div style="position:absolute;-webkit-text-stroke:0.1px #262626;top:443.22px;font-size:11.5px;line-height:11.5px;color:#262626;letter-spacing:0.000px;font-weight:normal;white-space:nowrap;transform:scaleX(1.2138);left:213.12px;width:400px;text-align:center;transform-origin:50% 0">07-26-2013</div>
<div style="position:absolute;-webkit-text-stroke:0.1px #262626;top:443.22px;font-size:11.5px;line-height:11.5px;color:#262626;letter-spacing:0.000px;font-weight:normal;white-space:nowrap;transform:scaleX(1.2138);left:309.88px;width:400px;text-align:center;transform-origin:50% 0">08-05-2013</div>
<div style="position:absolute;-webkit-text-stroke:0.1px #262626;top:443.22px;font-size:11.5px;line-height:11.5px;color:#262626;letter-spacing:0.000px;font-weight:normal;white-space:nowrap;transform:scaleX(1.2091);right:565.60px;transform-origin:100% 0">150.00</div>
<div style="position:absolute;-webkit-text-stroke:0.1px #262626;top:443.22px;font-size:11.5px;line-height:11.5px;color:#262626;letter-spacing:0.000px;font-weight:normal;white-space:nowrap;transform:scaleX(1.2126);right:482.80px;transform-origin:100% 0">16.00</div>
<div style="position:absolute;-webkit-text-stroke:0.1px #262626;top:443.22px;font-size:11.5px;line-height:11.5px;color:#262626;letter-spacing:0.000px;font-weight:normal;white-space:nowrap;transform:scaleX(1.2091);right:398.50px;transform-origin:100% 0">166.00</div>
<div style="position:absolute;-webkit-text-stroke:0.1px #262626;top:443.22px;font-size:11.5px;line-height:11.5px;color:#262626;letter-spacing:0.000px;font-weight:normal;white-space:nowrap;transform:scaleX(1.1769);left:641.10px;width:400px;text-align:center;transform-origin:50% 0">unpaid</div>
<svg style="position:absolute;left:1085px;top:435.050px" width="70" height="25" viewBox="0 0 70 25"><path d="M10.2 6.8 H16.2 L18.9 9.5 V16.6 H10.2Z" fill="#1f7b9a"/><path d="M15.5 6.6 V10.8 H19.2" stroke="#c4eef9" stroke-width="1.05" fill="none"/><circle cx="9.7" cy="13.2" r="3.6" fill="#d8f4fb"/><circle cx="9.7" cy="13.2" r="2.6" fill="#f4fbfd" stroke="#3b8a9c" stroke-width="1.3"/><path d="M7.9 15.3 L5.3 18.4" stroke="#2f7f96" stroke-width="1.8" stroke-linecap="round"/><path d="M25.3 17.8 L25.8 14.8 L32.4 8.2 Q33.8 7 35.0 8.3 Q36.1 9.6 34.9 10.9 L28.3 17.4Z" fill="#4296c2"/><path d="M27 16.2 L33.8 9.4" stroke="#9fd3ea" stroke-width=".8"/><path d="M43.9 7.8 V15.3 Q48 17.3 52.1 15.3 V7.8Z" fill="#2a7b9c"/><path d="M43.9 10.6 Q48 12.4 52.1 10.6 M43.9 13.2 Q48 15 52.1 13.2" stroke="#a6dcee" stroke-width=".8" fill="none"/><ellipse cx="48" cy="7.6" rx="4.1" ry="2" fill="#2f86a8" stroke="#a6dcee" stroke-width=".6"/><path d="M38.7 12.4 V16.6 Q42.7 18.8 46.8 16.6 V12.4Z" fill="#2a7b9c"/><path d="M38.7 14.8 Q42.7 16.8 46.8 14.8" stroke="#a6dcee" stroke-width=".8" fill="none"/><ellipse cx="42.75" cy="12.3" rx="4.1" ry="1.9" fill="#2f86a8" stroke="#a6dcee" stroke-width=".6"/><path d="M58.8 8.5 L65.2 14.2 M65.2 8.5 L58.8 14.2" stroke="#c0283e" stroke-width="1.8"/></svg>
<div style="position:absolute;-webkit-text-stroke:0.1px #262626;top:468.53px;font-size:11.5px;line-height:11.5px;color:#262626;letter-spacing:0.000px;font-weight:normal;white-space:nowrap;transform:scaleX(1.1933);right:1130.00px;transform-origin:100% 0">6</div>
<div style="position:absolute;-webkit-text-stroke:0.1px #262626;top:468.53px;font-size:11.5px;line-height:11.5px;color:#262626;letter-spacing:0.000px;font-weight:normal;white-space:nowrap;transform:scaleX(1.1736);left:83.7px;transform-origin:0 0">Private Customer</div>
<div style="position:absolute;-webkit-text-stroke:0.1px #262626;top:468.53px;font-size:11.5px;line-height:11.5px;color:#262626;letter-spacing:0.000px;font-weight:normal;white-space:nowrap;transform:scaleX(1.1933);left:125.38px;width:400px;text-align:center;transform-origin:50% 0">17</div>
<div style="position:absolute;-webkit-text-stroke:0.1px #262626;top:468.53px;font-size:11.5px;line-height:11.5px;color:#262626;letter-spacing:0.000px;font-weight:normal;white-space:nowrap;transform:scaleX(1.2138);left:213.12px;width:400px;text-align:center;transform-origin:50% 0">07-26-2013</div>
<div style="position:absolute;-webkit-text-stroke:0.1px #262626;top:468.53px;font-size:11.5px;line-height:11.5px;color:#262626;letter-spacing:0.000px;font-weight:normal;white-space:nowrap;transform:scaleX(1.2138);left:309.88px;width:400px;text-align:center;transform-origin:50% 0">08-05-2013</div>
<div style="position:absolute;-webkit-text-stroke:0.1px #262626;top:468.53px;font-size:11.5px;line-height:11.5px;color:#262626;letter-spacing:0.000px;font-weight:normal;white-space:nowrap;transform:scaleX(1.2126);right:565.60px;transform-origin:100% 0">70.00</div>
<div style="position:absolute;-webkit-text-stroke:0.1px #262626;top:468.53px;font-size:11.5px;line-height:11.5px;color:#262626;letter-spacing:0.000px;font-weight:normal;white-space:nowrap;transform:scaleX(1.2126);right:482.80px;transform-origin:100% 0">18.40</div>
<div style="position:absolute;-webkit-text-stroke:0.1px #262626;top:468.53px;font-size:11.5px;line-height:11.5px;color:#262626;letter-spacing:0.000px;font-weight:normal;white-space:nowrap;transform:scaleX(1.2126);right:398.50px;transform-origin:100% 0">88.40</div>
<div style="position:absolute;-webkit-text-stroke:0.1px #262626;top:468.53px;font-size:11.5px;line-height:11.5px;color:#262626;letter-spacing:0.000px;font-weight:normal;white-space:nowrap;transform:scaleX(1.1769);left:641.10px;width:400px;text-align:center;transform-origin:50% 0">unpaid</div>
<div style="position:absolute;-webkit-text-stroke:0.1px #262626;top:468.53px;font-size:11.5px;line-height:11.5px;color:#262626;letter-spacing:0.000px;font-weight:normal;white-space:nowrap;transform:scaleX(1.2055);left:877.3px;transform-origin:0 0">invoice not paid yet</div>
<svg style="position:absolute;left:1085px;top:460.363px" width="70" height="25" viewBox="0 0 70 25"><path d="M10.2 6.8 H16.2 L18.9 9.5 V16.6 H10.2Z" fill="#1f7b9a"/><path d="M15.5 6.6 V10.8 H19.2" stroke="#c4eef9" stroke-width="1.05" fill="none"/><circle cx="9.7" cy="13.2" r="3.6" fill="#d8f4fb"/><circle cx="9.7" cy="13.2" r="2.6" fill="#f4fbfd" stroke="#3b8a9c" stroke-width="1.3"/><path d="M7.9 15.3 L5.3 18.4" stroke="#2f7f96" stroke-width="1.8" stroke-linecap="round"/><path d="M25.3 17.8 L25.8 14.8 L32.4 8.2 Q33.8 7 35.0 8.3 Q36.1 9.6 34.9 10.9 L28.3 17.4Z" fill="#4296c2"/><path d="M27 16.2 L33.8 9.4" stroke="#9fd3ea" stroke-width=".8"/><path d="M43.9 7.8 V15.3 Q48 17.3 52.1 15.3 V7.8Z" fill="#2a7b9c"/><path d="M43.9 10.6 Q48 12.4 52.1 10.6 M43.9 13.2 Q48 15 52.1 13.2" stroke="#a6dcee" stroke-width=".8" fill="none"/><ellipse cx="48" cy="7.6" rx="4.1" ry="2" fill="#2f86a8" stroke="#a6dcee" stroke-width=".6"/><path d="M38.7 12.4 V16.6 Q42.7 18.8 46.8 16.6 V12.4Z" fill="#2a7b9c"/><path d="M38.7 14.8 Q42.7 16.8 46.8 14.8" stroke="#a6dcee" stroke-width=".8" fill="none"/><ellipse cx="42.75" cy="12.3" rx="4.1" ry="1.9" fill="#2f86a8" stroke="#a6dcee" stroke-width=".6"/><path d="M58.8 8.5 L65.2 14.2 M65.2 8.5 L58.8 14.2" stroke="#c0283e" stroke-width="1.8"/></svg>
<div style="position:absolute;-webkit-text-stroke:0.1px #262626;top:493.84px;font-size:11.5px;line-height:11.5px;color:#262626;letter-spacing:0.000px;font-weight:normal;white-space:nowrap;transform:scaleX(1.1933);right:1130.00px;transform-origin:100% 0">7</div>
<div style="position:absolute;-webkit-text-stroke:0.1px #262626;top:493.84px;font-size:11.5px;line-height:11.5px;color:#262626;letter-spacing:0.000px;font-weight:normal;white-space:nowrap;transform:scaleX(1.1600);left:83.7px;transform-origin:0 0">Customer LTD</div>
<div style="position:absolute;-webkit-text-stroke:0.1px #262626;top:493.84px;font-size:11.5px;line-height:11.5px;color:#262626;letter-spacing:0.000px;font-weight:normal;white-space:nowrap;transform:scaleX(1.1933);left:125.38px;width:400px;text-align:center;transform-origin:50% 0">16</div>
<div style="position:absolute;-webkit-text-stroke:0.1px #262626;top:493.84px;font-size:11.5px;line-height:11.5px;color:#262626;letter-spacing:0.000px;font-weight:normal;white-space:nowrap;transform:scaleX(1.2138);left:213.12px;width:400px;text-align:center;transform-origin:50% 0">07-26-2013</div>
<div style="position:absolute;-webkit-text-stroke:0.1px #262626;top:493.84px;font-size:11.5px;line-height:11.5px;color:#262626;letter-spacing:0.000px;font-weight:normal;white-space:nowrap;transform:scaleX(1.2138);left:309.88px;width:400px;text-align:center;transform-origin:50% 0">08-05-2013</div>
<div style="position:absolute;-webkit-text-stroke:0.1px #262626;top:493.84px;font-size:11.5px;line-height:11.5px;color:#262626;letter-spacing:0.000px;font-weight:normal;white-space:nowrap;transform:scaleX(1.2126);right:565.60px;transform-origin:100% 0">25.00</div>
<div style="position:absolute;-webkit-text-stroke:0.1px #262626;top:493.84px;font-size:11.5px;line-height:11.5px;color:#262626;letter-spacing:0.000px;font-weight:normal;white-space:nowrap;transform:scaleX(1.2181);right:482.80px;transform-origin:100% 0">4.45</div>
<div style="position:absolute;-webkit-text-stroke:0.1px #262626;top:493.84px;font-size:11.5px;line-height:11.5px;color:#262626;letter-spacing:0.000px;font-weight:normal;white-space:nowrap;transform:scaleX(1.2126);right:398.50px;transform-origin:100% 0">29.45</div>
<div style="position:absolute;-webkit-text-stroke:0.1px #262626;top:493.84px;font-size:11.5px;line-height:11.5px;color:#262626;letter-spacing:0.000px;font-weight:normal;white-space:nowrap;transform:scaleX(1.1769);left:641.10px;width:400px;text-align:center;transform-origin:50% 0">unpaid</div>
<svg style="position:absolute;left:1085px;top:485.675px" width="70" height="25" viewBox="0 0 70 25"><path d="M10.2 6.8 H16.2 L18.9 9.5 V16.6 H10.2Z" fill="#1f7b9a"/><path d="M15.5 6.6 V10.8 H19.2" stroke="#c4eef9" stroke-width="1.05" fill="none"/><circle cx="9.7" cy="13.2" r="3.6" fill="#d8f4fb"/><circle cx="9.7" cy="13.2" r="2.6" fill="#f4fbfd" stroke="#3b8a9c" stroke-width="1.3"/><path d="M7.9 15.3 L5.3 18.4" stroke="#2f7f96" stroke-width="1.8" stroke-linecap="round"/><path d="M25.3 17.8 L25.8 14.8 L32.4 8.2 Q33.8 7 35.0 8.3 Q36.1 9.6 34.9 10.9 L28.3 17.4Z" fill="#4296c2"/><path d="M27 16.2 L33.8 9.4" stroke="#9fd3ea" stroke-width=".8"/><path d="M43.9 7.8 V15.3 Q48 17.3 52.1 15.3 V7.8Z" fill="#2a7b9c"/><path d="M43.9 10.6 Q48 12.4 52.1 10.6 M43.9 13.2 Q48 15 52.1 13.2" stroke="#a6dcee" stroke-width=".8" fill="none"/><ellipse cx="48" cy="7.6" rx="4.1" ry="2" fill="#2f86a8" stroke="#a6dcee" stroke-width=".6"/><path d="M38.7 12.4 V16.6 Q42.7 18.8 46.8 16.6 V12.4Z" fill="#2a7b9c"/><path d="M38.7 14.8 Q42.7 16.8 46.8 14.8" stroke="#a6dcee" stroke-width=".8" fill="none"/><ellipse cx="42.75" cy="12.3" rx="4.1" ry="1.9" fill="#2f86a8" stroke="#a6dcee" stroke-width=".6"/><path d="M58.8 8.5 L65.2 14.2 M65.2 8.5 L58.8 14.2" stroke="#c0283e" stroke-width="1.8"/></svg>
<div style="position:absolute;-webkit-text-stroke:0.1px #262626;top:519.15px;font-size:11.5px;line-height:11.5px;color:#262626;letter-spacing:0.000px;font-weight:normal;white-space:nowrap;transform:scaleX(1.1933);right:1130.00px;transform-origin:100% 0">8</div>
<div style="position:absolute;-webkit-text-stroke:0.1px #262626;top:519.15px;font-size:11.5px;line-height:11.5px;color:#262626;letter-spacing:0.000px;font-weight:normal;white-space:nowrap;transform:scaleX(1.1736);left:83.7px;transform-origin:0 0">Private Customer</div>
<div style="position:absolute;-webkit-text-stroke:0.1px #262626;top:519.15px;font-size:11.5px;line-height:11.5px;color:#262626;letter-spacing:0.000px;font-weight:normal;white-space:nowrap;transform:scaleX(1.1933);left:125.38px;width:400px;text-align:center;transform-origin:50% 0">15</div>
<div style="position:absolute;-webkit-text-stroke:0.1px #262626;top:519.15px;font-size:11.5px;line-height:11.5px;color:#262626;letter-spacing:0.000px;font-weight:normal;white-space:nowrap;transform:scaleX(1.2138);left:213.12px;width:400px;text-align:center;transform-origin:50% 0">07-25-2013</div>
<div style="position:absolute;-webkit-text-stroke:0.1px #262626;top:519.15px;font-size:11.5px;line-height:11.5px;color:#262626;letter-spacing:0.000px;font-weight:normal;white-space:nowrap;transform:scaleX(1.2138);left:309.88px;width:400px;text-align:center;transform-origin:50% 0">08-04-2013</div>
<div style="position:absolute;-webkit-text-stroke:0.1px #262626;top:519.15px;font-size:11.5px;line-height:11.5px;color:#262626;letter-spacing:0.000px;font-weight:normal;white-space:nowrap;transform:scaleX(1.2091);right:565.60px;transform-origin:100% 0">100.00</div>
<div style="position:absolute;-webkit-text-stroke:0.1px #262626;top:519.15px;font-size:11.5px;line-height:11.5px;color:#262626;letter-spacing:0.000px;font-weight:normal;white-space:nowrap;transform:scaleX(1.2126);right:482.80px;transform-origin:100% 0">10.00</div>
<div style="position:absolute;-webkit-text-stroke:0.1px #262626;top:519.15px;font-size:11.5px;line-height:11.5px;color:#262626;letter-spacing:0.000px;font-weight:normal;white-space:nowrap;transform:scaleX(1.2391);right:398.50px;transform-origin:100% 0">110.00</div>
<div style="position:absolute;-webkit-text-stroke:0.1px #33a35a;top:519.15px;font-size:11.5px;line-height:11.5px;color:#33a35a;letter-spacing:0.000px;font-weight:normal;white-space:nowrap;transform:scaleX(1.1706);left:641.10px;width:400px;text-align:center;transform-origin:50% 0">paid</div>
<svg style="position:absolute;left:1085px;top:510.988px" width="70" height="25" viewBox="0 0 70 25"><path d="M10.2 6.8 H16.2 L18.9 9.5 V16.6 H10.2Z" fill="#1f7b9a"/><path d="M15.5 6.6 V10.8 H19.2" stroke="#c4eef9" stroke-width="1.05" fill="none"/><circle cx="9.7" cy="13.2" r="3.6" fill="#d8f4fb"/><circle cx="9.7" cy="13.2" r="2.6" fill="#f4fbfd" stroke="#3b8a9c" stroke-width="1.3"/><path d="M7.9 15.3 L5.3 18.4" stroke="#2f7f96" stroke-width="1.8" stroke-linecap="round"/><path d="M25.3 17.8 L25.8 14.8 L32.4 8.2 Q33.8 7 35.0 8.3 Q36.1 9.6 34.9 10.9 L28.3 17.4Z" fill="#4296c2"/><path d="M27 16.2 L33.8 9.4" stroke="#9fd3ea" stroke-width=".8"/><path d="M43.9 7.8 V15.3 Q48 17.3 52.1 15.3 V7.8Z" fill="#2a7b9c"/><path d="M43.9 10.6 Q48 12.4 52.1 10.6 M43.9 13.2 Q48 15 52.1 13.2" stroke="#a6dcee" stroke-width=".8" fill="none"/><ellipse cx="48" cy="7.6" rx="4.1" ry="2" fill="#2f86a8" stroke="#a6dcee" stroke-width=".6"/><path d="M38.7 12.4 V16.6 Q42.7 18.8 46.8 16.6 V12.4Z" fill="#2a7b9c"/><path d="M38.7 14.8 Q42.7 16.8 46.8 14.8" stroke="#a6dcee" stroke-width=".8" fill="none"/><ellipse cx="42.75" cy="12.3" rx="4.1" ry="1.9" fill="#2f86a8" stroke="#a6dcee" stroke-width=".6"/><path d="M58.8 8.5 L65.2 14.2 M65.2 8.5 L58.8 14.2" stroke="#c0283e" stroke-width="1.8"/></svg>
<div style="position:absolute;-webkit-text-stroke:0.1px #262626;top:544.47px;font-size:11.5px;line-height:11.5px;color:#262626;letter-spacing:0.000px;font-weight:normal;white-space:nowrap;transform:scaleX(1.1933);right:1130.00px;transform-origin:100% 0">9</div>
<div style="position:absolute;-webkit-text-stroke:0.1px #262626;top:544.47px;font-size:11.5px;line-height:11.5px;color:#262626;letter-spacing:0.000px;font-weight:normal;white-space:nowrap;transform:scaleX(1.1736);left:83.7px;transform-origin:0 0">Private Customer</div>
<div style="position:absolute;-webkit-text-stroke:0.1px #262626;top:544.47px;font-size:11.5px;line-height:11.5px;color:#262626;letter-spacing:0.000px;font-weight:normal;white-space:nowrap;transform:scaleX(1.1933);left:125.38px;width:400px;text-align:center;transform-origin:50% 0">14</div>
<div style="position:absolute;-webkit-text-stroke:0.1px #262626;top:544.47px;font-size:11.5px;line-height:11.5px;color:#262626;letter-spacing:0.000px;font-weight:normal;white-space:nowrap;transform:scaleX(1.2138);left:213.12px;width:400px;text-align:center;transform-origin:50% 0">07-25-2013</div>
<div style="position:absolute;-webkit-text-stroke:0.1px #262626;top:544.47px;font-size:11.5px;line-height:11.5px;color:#262626;letter-spacing:0.000px;font-weight:normal;white-space:nowrap;transform:scaleX(1.2138);left:309.88px;width:400px;text-align:center;transform-origin:50% 0">08-04-2013</div>
<div style="position:absolute;-webkit-text-stroke:0.1px #262626;top:544.47px;font-size:11.5px;line-height:11.5px;color:#262626;letter-spacing:0.000px;font-weight:normal;white-space:nowrap;transform:scaleX(1.2126);right:565.60px;transform-origin:100% 0">40.00</div>
<div style="position:absolute;-webkit-text-stroke:0.1px #262626;top:544.47px;font-size:11.5px;line-height:11.5px;color:#262626;letter-spacing:0.000px;font-weight:normal;white-space:nowrap;transform:scaleX(1.2496);right:482.80px;transform-origin:100% 0">11.50</div>
<div style="position:absolute;-webkit-text-stroke:0.1px #262626;top:544.47px;font-size:11.5px;line-height:11.5px;color:#262626;letter-spacing:0.000px;font-weight:normal;white-space:nowrap;transform:scaleX(1.2126);right:398.50px;transform-origin:100% 0">51.50</div>
<div style="position:absolute;-webkit-text-stroke:0.1px #33a35a;top:544.47px;font-size:11.5px;line-height:11.5px;color:#33a35a;letter-spacing:0.000px;font-weight:normal;white-space:nowrap;transform:scaleX(1.1706);left:641.10px;width:400px;text-align:center;transform-origin:50% 0">paid</div>
<svg style="position:absolute;left:1085px;top:536.300px" width="70" height="25" viewBox="0 0 70 25"><path d="M10.2 6.8 H16.2 L18.9 9.5 V16.6 H10.2Z" fill="#1f7b9a"/><path d="M15.5 6.6 V10.8 H19.2" stroke="#c4eef9" stroke-width="1.05" fill="none"/><circle cx="9.7" cy="13.2" r="3.6" fill="#d8f4fb"/><circle cx="9.7" cy="13.2" r="2.6" fill="#f4fbfd" stroke="#3b8a9c" stroke-width="1.3"/><path d="M7.9 15.3 L5.3 18.4" stroke="#2f7f96" stroke-width="1.8" stroke-linecap="round"/><path d="M25.3 17.8 L25.8 14.8 L32.4 8.2 Q33.8 7 35.0 8.3 Q36.1 9.6 34.9 10.9 L28.3 17.4Z" fill="#4296c2"/><path d="M27 16.2 L33.8 9.4" stroke="#9fd3ea" stroke-width=".8"/><path d="M43.9 7.8 V15.3 Q48 17.3 52.1 15.3 V7.8Z" fill="#2a7b9c"/><path d="M43.9 10.6 Q48 12.4 52.1 10.6 M43.9 13.2 Q48 15 52.1 13.2" stroke="#a6dcee" stroke-width=".8" fill="none"/><ellipse cx="48" cy="7.6" rx="4.1" ry="2" fill="#2f86a8" stroke="#a6dcee" stroke-width=".6"/><path d="M38.7 12.4 V16.6 Q42.7 18.8 46.8 16.6 V12.4Z" fill="#2a7b9c"/><path d="M38.7 14.8 Q42.7 16.8 46.8 14.8" stroke="#a6dcee" stroke-width=".8" fill="none"/><ellipse cx="42.75" cy="12.3" rx="4.1" ry="1.9" fill="#2f86a8" stroke="#a6dcee" stroke-width=".6"/><path d="M58.8 8.5 L65.2 14.2 M65.2 8.5 L58.8 14.2" stroke="#c0283e" stroke-width="1.8"/></svg>
<div style="position:absolute;-webkit-text-stroke:0.1px #262626;top:569.78px;font-size:11.5px;line-height:11.5px;color:#262626;letter-spacing:0.000px;font-weight:normal;white-space:nowrap;transform:scaleX(1.1933);right:1130.00px;transform-origin:100% 0">10</div>
<div style="position:absolute;-webkit-text-stroke:0.1px #262626;top:569.78px;font-size:11.5px;line-height:11.5px;color:#262626;letter-spacing:0.000px;font-weight:normal;white-space:nowrap;transform:scaleX(1.1600);left:83.7px;transform-origin:0 0">Customer LTD</div>
<div style="position:absolute;-webkit-text-stroke:0.1px #262626;top:569.78px;font-size:11.5px;line-height:11.5px;color:#262626;letter-spacing:0.000px;font-weight:normal;white-space:nowrap;transform:scaleX(1.1933);left:125.38px;width:400px;text-align:center;transform-origin:50% 0">13</div>
<div style="position:absolute;-webkit-text-stroke:0.1px #262626;top:569.78px;font-size:11.5px;line-height:11.5px;color:#262626;letter-spacing:0.000px;font-weight:normal;white-space:nowrap;transform:scaleX(1.2138);left:213.12px;width:400px;text-align:center;transform-origin:50% 0">07-25-2013</div>
<div style="position:absolute;-webkit-text-stroke:0.1px #262626;top:569.78px;font-size:11.5px;line-height:11.5px;color:#262626;letter-spacing:0.000px;font-weight:normal;white-space:nowrap;transform:scaleX(1.2138);left:309.88px;width:400px;text-align:center;transform-origin:50% 0">08-04-2013</div>
<div style="position:absolute;-webkit-text-stroke:0.1px #262626;top:569.78px;font-size:11.5px;line-height:11.5px;color:#262626;letter-spacing:0.000px;font-weight:normal;white-space:nowrap;transform:scaleX(1.2091);right:565.60px;transform-origin:100% 0">190.00</div>
<div style="position:absolute;-webkit-text-stroke:0.1px #262626;top:569.78px;font-size:11.5px;line-height:11.5px;color:#262626;letter-spacing:0.000px;font-weight:normal;white-space:nowrap;transform:scaleX(1.2126);right:482.80px;transform-origin:100% 0">20.00</div>
<div style="position:absolute;-webkit-text-stroke:0.1px #262626;top:569.78px;font-size:11.5px;line-height:11.5px;color:#262626;letter-spacing:0.000px;font-weight:normal;white-space:nowrap;transform:scaleX(1.2091);right:398.50px;transform-origin:100% 0">210.00</div>
<div style="position:absolute;-webkit-text-stroke:0.1px #262626;top:569.78px;font-size:11.5px;line-height:11.5px;color:#262626;letter-spacing:0.000px;font-weight:normal;white-space:nowrap;transform:scaleX(1.1769);left:641.10px;width:400px;text-align:center;transform-origin:50% 0">unpaid</div>
<div style="position:absolute;-webkit-text-stroke:0.1px #262626;top:569.78px;font-size:11.5px;line-height:11.5px;color:#262626;letter-spacing:0.000px;font-weight:normal;white-space:nowrap;transform:scaleX(1.2098);left:877.3px;transform-origin:0 0">private notes for this invoice</div>
<svg style="position:absolute;left:1085px;top:561.612px" width="70" height="25" viewBox="0 0 70 25"><path d="M10.2 6.8 H16.2 L18.9 9.5 V16.6 H10.2Z" fill="#1f7b9a"/><path d="M15.5 6.6 V10.8 H19.2" stroke="#c4eef9" stroke-width="1.05" fill="none"/><circle cx="9.7" cy="13.2" r="3.6" fill="#d8f4fb"/><circle cx="9.7" cy="13.2" r="2.6" fill="#f4fbfd" stroke="#3b8a9c" stroke-width="1.3"/><path d="M7.9 15.3 L5.3 18.4" stroke="#2f7f96" stroke-width="1.8" stroke-linecap="round"/><path d="M25.3 17.8 L25.8 14.8 L32.4 8.2 Q33.8 7 35.0 8.3 Q36.1 9.6 34.9 10.9 L28.3 17.4Z" fill="#4296c2"/><path d="M27 16.2 L33.8 9.4" stroke="#9fd3ea" stroke-width=".8"/><path d="M43.9 7.8 V15.3 Q48 17.3 52.1 15.3 V7.8Z" fill="#2a7b9c"/><path d="M43.9 10.6 Q48 12.4 52.1 10.6 M43.9 13.2 Q48 15 52.1 13.2" stroke="#a6dcee" stroke-width=".8" fill="none"/><ellipse cx="48" cy="7.6" rx="4.1" ry="2" fill="#2f86a8" stroke="#a6dcee" stroke-width=".6"/><path d="M38.7 12.4 V16.6 Q42.7 18.8 46.8 16.6 V12.4Z" fill="#2a7b9c"/><path d="M38.7 14.8 Q42.7 16.8 46.8 14.8" stroke="#a6dcee" stroke-width=".8" fill="none"/><ellipse cx="42.75" cy="12.3" rx="4.1" ry="1.9" fill="#2f86a8" stroke="#a6dcee" stroke-width=".6"/><path d="M58.8 8.5 L65.2 14.2 M65.2 8.5 L58.8 14.2" stroke="#c0283e" stroke-width="1.8"/></svg>
<div style="position:absolute;-webkit-text-stroke:0.1px #262626;top:595.09px;font-size:11.5px;line-height:11.5px;color:#262626;letter-spacing:0.000px;font-weight:normal;white-space:nowrap;transform:scaleX(1.2786);right:1130.00px;transform-origin:100% 0">11</div>
<div style="position:absolute;-webkit-text-stroke:0.1px #262626;top:595.09px;font-size:11.5px;line-height:11.5px;color:#262626;letter-spacing:0.000px;font-weight:normal;white-space:nowrap;transform:scaleX(1.1578);left:83.7px;transform-origin:0 0">Customer GmbH</div>
<div style="position:absolute;-webkit-text-stroke:0.1px #262626;top:595.09px;font-size:11.5px;line-height:11.5px;color:#262626;letter-spacing:0.000px;font-weight:normal;white-space:nowrap;transform:scaleX(1.1933);left:125.38px;width:400px;text-align:center;transform-origin:50% 0">12</div>
<div style="position:absolute;-webkit-text-stroke:0.1px #262626;top:595.09px;font-size:11.5px;line-height:11.5px;color:#262626;letter-spacing:0.000px;font-weight:normal;white-space:nowrap;transform:scaleX(1.2138);left:213.12px;width:400px;text-align:center;transform-origin:50% 0">07-22-2013</div>
<div style="position:absolute;-webkit-text-stroke:0.1px #262626;top:595.09px;font-size:11.5px;line-height:11.5px;color:#262626;letter-spacing:0.000px;font-weight:normal;white-space:nowrap;transform:scaleX(1.2138);left:309.88px;width:400px;text-align:center;transform-origin:50% 0">08-01-2013</div>
<div style="position:absolute;-webkit-text-stroke:0.1px #262626;top:595.09px;font-size:11.5px;line-height:11.5px;color:#262626;letter-spacing:0.000px;font-weight:normal;white-space:nowrap;transform:scaleX(1.2091);right:565.60px;transform-origin:100% 0">100.00</div>
<div style="position:absolute;-webkit-text-stroke:0.1px #262626;top:595.09px;font-size:11.5px;line-height:11.5px;color:#262626;letter-spacing:0.000px;font-weight:normal;white-space:nowrap;transform:scaleX(1.2126);right:482.80px;transform-origin:100% 0">23.00</div>
<div style="position:absolute;-webkit-text-stroke:0.1px #262626;top:595.09px;font-size:11.5px;line-height:11.5px;color:#262626;letter-spacing:0.000px;font-weight:normal;white-space:nowrap;transform:scaleX(1.2091);right:398.50px;transform-origin:100% 0">123.00</div>
<div style="position:absolute;-webkit-text-stroke:0.1px #262626;top:595.09px;font-size:11.5px;line-height:11.5px;color:#262626;letter-spacing:0.000px;font-weight:normal;white-space:nowrap;transform:scaleX(1.1769);left:641.10px;width:400px;text-align:center;transform-origin:50% 0">unpaid</div>
<svg style="position:absolute;left:1085px;top:586.925px" width="70" height="25" viewBox="0 0 70 25"><path d="M10.2 6.8 H16.2 L18.9 9.5 V16.6 H10.2Z" fill="#1f7b9a"/><path d="M15.5 6.6 V10.8 H19.2" stroke="#c4eef9" stroke-width="1.05" fill="none"/><circle cx="9.7" cy="13.2" r="3.6" fill="#d8f4fb"/><circle cx="9.7" cy="13.2" r="2.6" fill="#f4fbfd" stroke="#3b8a9c" stroke-width="1.3"/><path d="M7.9 15.3 L5.3 18.4" stroke="#2f7f96" stroke-width="1.8" stroke-linecap="round"/><path d="M25.3 17.8 L25.8 14.8 L32.4 8.2 Q33.8 7 35.0 8.3 Q36.1 9.6 34.9 10.9 L28.3 17.4Z" fill="#4296c2"/><path d="M27 16.2 L33.8 9.4" stroke="#9fd3ea" stroke-width=".8"/><path d="M43.9 7.8 V15.3 Q48 17.3 52.1 15.3 V7.8Z" fill="#2a7b9c"/><path d="M43.9 10.6 Q48 12.4 52.1 10.6 M43.9 13.2 Q48 15 52.1 13.2" stroke="#a6dcee" stroke-width=".8" fill="none"/><ellipse cx="48" cy="7.6" rx="4.1" ry="2" fill="#2f86a8" stroke="#a6dcee" stroke-width=".6"/><path d="M38.7 12.4 V16.6 Q42.7 18.8 46.8 16.6 V12.4Z" fill="#2a7b9c"/><path d="M38.7 14.8 Q42.7 16.8 46.8 14.8" stroke="#a6dcee" stroke-width=".8" fill="none"/><ellipse cx="42.75" cy="12.3" rx="4.1" ry="1.9" fill="#2f86a8" stroke="#a6dcee" stroke-width=".6"/><path d="M58.8 8.5 L65.2 14.2 M65.2 8.5 L58.8 14.2" stroke="#c0283e" stroke-width="1.8"/></svg>
<div style="position:absolute;-webkit-text-stroke:0.1px #262626;top:621.20px;font-size:11.5px;line-height:11.5px;color:#262626;letter-spacing:0.000px;font-weight:normal;white-space:nowrap;transform:scaleX(1.1933);right:1130.00px;transform-origin:100% 0">12</div>
<div style="position:absolute;-webkit-text-stroke:0.1px #262626;top:621.20px;font-size:11.5px;line-height:11.5px;color:#262626;letter-spacing:0.000px;font-weight:normal;white-space:nowrap;transform:scaleX(1.4798);left:83.7px;transform-origin:0 0">tttt</div>
<div style="position:absolute;-webkit-text-stroke:0.1px #262626;top:621.20px;font-size:11.5px;line-height:11.5px;color:#262626;letter-spacing:0.000px;font-weight:normal;white-space:nowrap;transform:scaleX(1.2786);left:125.38px;width:400px;text-align:center;transform-origin:50% 0">11</div>
<div style="position:absolute;-webkit-text-stroke:0.1px #262626;top:621.20px;font-size:11.5px;line-height:11.5px;color:#262626;letter-spacing:0.000px;font-weight:normal;white-space:nowrap;transform:scaleX(1.2138);left:213.12px;width:400px;text-align:center;transform-origin:50% 0">07-03-2013</div>
<div style="position:absolute;-webkit-text-stroke:0.1px #262626;top:621.20px;font-size:11.5px;line-height:11.5px;color:#262626;letter-spacing:0.000px;font-weight:normal;white-space:nowrap;transform:scaleX(1.2138);left:309.88px;width:400px;text-align:center;transform-origin:50% 0">07-31-2013</div>
<div style="position:absolute;-webkit-text-stroke:0.1px #262626;top:621.20px;font-size:11.5px;line-height:11.5px;color:#262626;letter-spacing:0.000px;font-weight:normal;white-space:nowrap;transform:scaleX(1.2181);right:565.60px;transform-origin:100% 0">5.00</div>
<div style="position:absolute;-webkit-text-stroke:0.1px #262626;top:621.20px;font-size:11.5px;line-height:11.5px;color:#262626;letter-spacing:0.000px;font-weight:normal;white-space:nowrap;transform:scaleX(1.2181);right:482.80px;transform-origin:100% 0">1.15</div>
<div style="position:absolute;-webkit-text-stroke:0.1px #262626;top:621.20px;font-size:11.5px;line-height:11.5px;color:#262626;letter-spacing:0.000px;font-weight:normal;white-space:nowrap;transform:scaleX(1.2181);right:398.50px;transform-origin:100% 0">6.15</div>
<div style="position:absolute;-webkit-text-stroke:0.1px #262626;top:615.80px;font-size:11.5px;line-height:11.5px;color:#262626;letter-spacing:0.000px;font-weight:normal;white-space:nowrap;transform:scaleX(1.1769);left:641.10px;width:400px;text-align:center;transform-origin:50% 0">unpaid</div>
<div style="position:absolute;-webkit-text-stroke:0.1px #e8383a;top:625.90px;font-size:11.5px;line-height:11.5px;color:#e8383a;letter-spacing:0.000px;font-weight:normal;white-space:nowrap;transform:scaleX(1.1764);left:641.10px;width:400px;text-align:center;transform-origin:50% 0">overdue</div>
<svg style="position:absolute;left:1085px;top:612.237px" width="70" height="25" viewBox="0 0 70 25"><path d="M10.2 6.8 H16.2 L18.9 9.5 V16.6 H10.2Z" fill="#1f7b9a"/><path d="M15.5 6.6 V10.8 H19.2" stroke="#c4eef9" stroke-width="1.05" fill="none"/><circle cx="9.7" cy="13.2" r="3.6" fill="#d8f4fb"/><circle cx="9.7" cy="13.2" r="2.6" fill="#f4fbfd" stroke="#3b8a9c" stroke-width="1.3"/><path d="M7.9 15.3 L5.3 18.4" stroke="#2f7f96" stroke-width="1.8" stroke-linecap="round"/><path d="M25.3 17.8 L25.8 14.8 L32.4 8.2 Q33.8 7 35.0 8.3 Q36.1 9.6 34.9 10.9 L28.3 17.4Z" fill="#4296c2"/><path d="M27 16.2 L33.8 9.4" stroke="#9fd3ea" stroke-width=".8"/><path d="M43.9 7.8 V15.3 Q48 17.3 52.1 15.3 V7.8Z" fill="#2a7b9c"/><path d="M43.9 10.6 Q48 12.4 52.1 10.6 M43.9 13.2 Q48 15 52.1 13.2" stroke="#a6dcee" stroke-width=".8" fill="none"/><ellipse cx="48" cy="7.6" rx="4.1" ry="2" fill="#2f86a8" stroke="#a6dcee" stroke-width=".6"/><path d="M38.7 12.4 V16.6 Q42.7 18.8 46.8 16.6 V12.4Z" fill="#2a7b9c"/><path d="M38.7 14.8 Q42.7 16.8 46.8 14.8" stroke="#a6dcee" stroke-width=".8" fill="none"/><ellipse cx="42.75" cy="12.3" rx="4.1" ry="1.9" fill="#2f86a8" stroke="#a6dcee" stroke-width=".6"/><path d="M58.8 8.5 L65.2 14.2 M65.2 8.5 L58.8 14.2" stroke="#c0283e" stroke-width="1.8"/></svg>
<div style="position:absolute;-webkit-text-stroke:0.1px #262626;top:646.52px;font-size:11.5px;line-height:11.5px;color:#262626;letter-spacing:0.000px;font-weight:normal;white-space:nowrap;transform:scaleX(1.1933);right:1130.00px;transform-origin:100% 0">13</div>
<div style="position:absolute;-webkit-text-stroke:0.1px #262626;top:646.52px;font-size:11.5px;line-height:11.5px;color:#262626;letter-spacing:0.000px;font-weight:normal;white-space:nowrap;transform:scaleX(1.4798);left:83.7px;transform-origin:0 0">tttt</div>
<div style="position:absolute;-webkit-text-stroke:0.1px #262626;top:646.52px;font-size:11.5px;line-height:11.5px;color:#262626;letter-spacing:0.000px;font-weight:normal;white-space:nowrap;transform:scaleX(1.1933);left:125.38px;width:400px;text-align:center;transform-origin:50% 0">10</div>
<div style="position:absolute;-webkit-text-stroke:0.1px #262626;top:646.52px;font-size:11.5px;line-height:11.5px;color:#262626;letter-spacing:0.000px;font-weight:normal;white-space:nowrap;transform:scaleX(1.2138);left:213.12px;width:400px;text-align:center;transform-origin:50% 0">07-03-2013</div>
<div style="position:absolute;-webkit-text-stroke:0.1px #262626;top:646.52px;font-size:11.5px;line-height:11.5px;color:#262626;letter-spacing:0.000px;font-weight:normal;white-space:nowrap;transform:scaleX(1.2138);left:309.88px;width:400px;text-align:center;transform-origin:50% 0">07-30-2013</div>
<div style="position:absolute;-webkit-text-stroke:0.1px #262626;top:646.52px;font-size:11.5px;line-height:11.5px;color:#262626;letter-spacing:0.000px;font-weight:normal;white-space:nowrap;transform:scaleX(1.2181);right:565.60px;transform-origin:100% 0">5.00</div>
<div style="position:absolute;-webkit-text-stroke:0.1px #262626;top:646.52px;font-size:11.5px;line-height:11.5px;color:#262626;letter-spacing:0.000px;font-weight:normal;white-space:nowrap;transform:scaleX(1.2181);right:482.80px;transform-origin:100% 0">1.15</div>
<div style="position:absolute;-webkit-text-stroke:0.1px #262626;top:646.52px;font-size:11.5px;line-height:11.5px;color:#262626;letter-spacing:0.000px;font-weight:normal;white-space:nowrap;transform:scaleX(1.2181);right:398.50px;transform-origin:100% 0">6.15</div>
<div style="position:absolute;-webkit-text-stroke:0.1px #262626;top:641.12px;font-size:11.5px;line-height:11.5px;color:#262626;letter-spacing:0.000px;font-weight:normal;white-space:nowrap;transform:scaleX(1.1769);left:641.10px;width:400px;text-align:center;transform-origin:50% 0">unpaid</div>
<div style="position:absolute;-webkit-text-stroke:0.1px #e8383a;top:651.22px;font-size:11.5px;line-height:11.5px;color:#e8383a;letter-spacing:0.000px;font-weight:normal;white-space:nowrap;transform:scaleX(1.1764);left:641.10px;width:400px;text-align:center;transform-origin:50% 0">overdue</div>
<svg style="position:absolute;left:1085px;top:637.550px" width="70" height="25" viewBox="0 0 70 25"><path d="M10.2 6.8 H16.2 L18.9 9.5 V16.6 H10.2Z" fill="#1f7b9a"/><path d="M15.5 6.6 V10.8 H19.2" stroke="#c4eef9" stroke-width="1.05" fill="none"/><circle cx="9.7" cy="13.2" r="3.6" fill="#d8f4fb"/><circle cx="9.7" cy="13.2" r="2.6" fill="#f4fbfd" stroke="#3b8a9c" stroke-width="1.3"/><path d="M7.9 15.3 L5.3 18.4" stroke="#2f7f96" stroke-width="1.8" stroke-linecap="round"/><path d="M25.3 17.8 L25.8 14.8 L32.4 8.2 Q33.8 7 35.0 8.3 Q36.1 9.6 34.9 10.9 L28.3 17.4Z" fill="#4296c2"/><path d="M27 16.2 L33.8 9.4" stroke="#9fd3ea" stroke-width=".8"/><path d="M43.9 7.8 V15.3 Q48 17.3 52.1 15.3 V7.8Z" fill="#2a7b9c"/><path d="M43.9 10.6 Q48 12.4 52.1 10.6 M43.9 13.2 Q48 15 52.1 13.2" stroke="#a6dcee" stroke-width=".8" fill="none"/><ellipse cx="48" cy="7.6" rx="4.1" ry="2" fill="#2f86a8" stroke="#a6dcee" stroke-width=".6"/><path d="M38.7 12.4 V16.6 Q42.7 18.8 46.8 16.6 V12.4Z" fill="#2a7b9c"/><path d="M38.7 14.8 Q42.7 16.8 46.8 14.8" stroke="#a6dcee" stroke-width=".8" fill="none"/><ellipse cx="42.75" cy="12.3" rx="4.1" ry="1.9" fill="#2f86a8" stroke="#a6dcee" stroke-width=".6"/><path d="M58.8 8.5 L65.2 14.2 M65.2 8.5 L58.8 14.2" stroke="#c0283e" stroke-width="1.8"/></svg>
<div style="position:absolute;-webkit-text-stroke:0.1px #262626;top:671.83px;font-size:11.5px;line-height:11.5px;color:#262626;letter-spacing:0.000px;font-weight:normal;white-space:nowrap;transform:scaleX(1.1933);right:1130.00px;transform-origin:100% 0">14</div>
<div style="position:absolute;-webkit-text-stroke:0.1px #262626;top:671.83px;font-size:11.5px;line-height:11.5px;color:#262626;letter-spacing:0.000px;font-weight:normal;white-space:nowrap;transform:scaleX(1.4798);left:83.7px;transform-origin:0 0">tttt</div>
<div style="position:absolute;-webkit-text-stroke:0.1px #262626;top:671.83px;font-size:11.5px;line-height:11.5px;color:#262626;letter-spacing:0.000px;font-weight:normal;white-space:nowrap;transform:scaleX(1.1933);left:125.38px;width:400px;text-align:center;transform-origin:50% 0">9</div>
<div style="position:absolute;-webkit-text-stroke:0.1px #262626;top:671.83px;font-size:11.5px;line-height:11.5px;color:#262626;letter-spacing:0.000px;font-weight:normal;white-space:nowrap;transform:scaleX(1.2138);left:213.12px;width:400px;text-align:center;transform-origin:50% 0">07-03-2013</div>
<div style="position:absolute;-webkit-text-stroke:0.1px #262626;top:671.83px;font-size:11.5px;line-height:11.5px;color:#262626;letter-spacing:0.000px;font-weight:normal;white-space:nowrap;transform:scaleX(1.2138);left:309.88px;width:400px;text-align:center;transform-origin:50% 0">07-29-2013</div>
<div style="position:absolute;-webkit-text-stroke:0.1px #262626;top:671.83px;font-size:11.5px;line-height:11.5px;color:#262626;letter-spacing:0.000px;font-weight:normal;white-space:nowrap;transform:scaleX(1.2126);right:565.60px;transform-origin:100% 0">23.00</div>
<div style="position:absolute;-webkit-text-stroke:0.1px #262626;top:671.83px;font-size:11.5px;line-height:11.5px;color:#262626;letter-spacing:0.000px;font-weight:normal;white-space:nowrap;transform:scaleX(1.2181);right:482.80px;transform-origin:100% 0">5.29</div>
<div style="position:absolute;-webkit-text-stroke:0.1px #262626;top:671.83px;font-size:11.5px;line-height:11.5px;color:#262626;letter-spacing:0.000px;font-weight:normal;white-space:nowrap;transform:scaleX(1.2126);right:398.50px;transform-origin:100% 0">28.29</div>
<div style="position:absolute;-webkit-text-stroke:0.1px #262626;top:666.43px;font-size:11.5px;line-height:11.5px;color:#262626;letter-spacing:0.000px;font-weight:normal;white-space:nowrap;transform:scaleX(1.1769);left:641.10px;width:400px;text-align:center;transform-origin:50% 0">unpaid</div>
<div style="position:absolute;-webkit-text-stroke:0.1px #e8383a;top:676.53px;font-size:11.5px;line-height:11.5px;color:#e8383a;letter-spacing:0.000px;font-weight:normal;white-space:nowrap;transform:scaleX(1.1764);left:641.10px;width:400px;text-align:center;transform-origin:50% 0">overdue</div>
<svg style="position:absolute;left:1085px;top:662.862px" width="70" height="25" viewBox="0 0 70 25"><path d="M10.2 6.8 H16.2 L18.9 9.5 V16.6 H10.2Z" fill="#1f7b9a"/><path d="M15.5 6.6 V10.8 H19.2" stroke="#c4eef9" stroke-width="1.05" fill="none"/><circle cx="9.7" cy="13.2" r="3.6" fill="#d8f4fb"/><circle cx="9.7" cy="13.2" r="2.6" fill="#f4fbfd" stroke="#3b8a9c" stroke-width="1.3"/><path d="M7.9 15.3 L5.3 18.4" stroke="#2f7f96" stroke-width="1.8" stroke-linecap="round"/><path d="M25.3 17.8 L25.8 14.8 L32.4 8.2 Q33.8 7 35.0 8.3 Q36.1 9.6 34.9 10.9 L28.3 17.4Z" fill="#4296c2"/><path d="M27 16.2 L33.8 9.4" stroke="#9fd3ea" stroke-width=".8"/><path d="M43.9 7.8 V15.3 Q48 17.3 52.1 15.3 V7.8Z" fill="#2a7b9c"/><path d="M43.9 10.6 Q48 12.4 52.1 10.6 M43.9 13.2 Q48 15 52.1 13.2" stroke="#a6dcee" stroke-width=".8" fill="none"/><ellipse cx="48" cy="7.6" rx="4.1" ry="2" fill="#2f86a8" stroke="#a6dcee" stroke-width=".6"/><path d="M38.7 12.4 V16.6 Q42.7 18.8 46.8 16.6 V12.4Z" fill="#2a7b9c"/><path d="M38.7 14.8 Q42.7 16.8 46.8 14.8" stroke="#a6dcee" stroke-width=".8" fill="none"/><ellipse cx="42.75" cy="12.3" rx="4.1" ry="1.9" fill="#2f86a8" stroke="#a6dcee" stroke-width=".6"/><path d="M58.8 8.5 L65.2 14.2 M65.2 8.5 L58.8 14.2" stroke="#c0283e" stroke-width="1.8"/></svg>
<div style="position:absolute;-webkit-text-stroke:0.1px #262626;top:697.14px;font-size:11.5px;line-height:11.5px;color:#262626;letter-spacing:0.000px;font-weight:normal;white-space:nowrap;transform:scaleX(1.1933);right:1130.00px;transform-origin:100% 0">15</div>
<div style="position:absolute;-webkit-text-stroke:0.1px #262626;top:697.14px;font-size:11.5px;line-height:11.5px;color:#262626;letter-spacing:0.000px;font-weight:normal;white-space:nowrap;transform:scaleX(1.4798);left:83.7px;transform-origin:0 0">tttt</div>
<div style="position:absolute;-webkit-text-stroke:0.1px #262626;top:697.14px;font-size:11.5px;line-height:11.5px;color:#262626;letter-spacing:0.000px;font-weight:normal;white-space:nowrap;transform:scaleX(1.1933);left:125.38px;width:400px;text-align:center;transform-origin:50% 0">8</div>
<div style="position:absolute;-webkit-text-stroke:0.1px #262626;top:697.14px;font-size:11.5px;line-height:11.5px;color:#262626;letter-spacing:0.000px;font-weight:normal;white-space:nowrap;transform:scaleX(1.2138);left:213.12px;width:400px;text-align:center;transform-origin:50% 0">07-03-2013</div>
<div style="position:absolute;-webkit-text-stroke:0.1px #262626;top:697.14px;font-size:11.5px;line-height:11.5px;color:#262626;letter-spacing:0.000px;font-weight:normal;white-space:nowrap;transform:scaleX(1.2138);left:309.88px;width:400px;text-align:center;transform-origin:50% 0">07-13-2013</div>
<div style="position:absolute;-webkit-text-stroke:0.1px #262626;top:697.14px;font-size:11.5px;line-height:11.5px;color:#262626;letter-spacing:0.000px;font-weight:normal;white-space:nowrap;transform:scaleX(1.2126);right:565.60px;transform-origin:100% 0">23.00</div>
<div style="position:absolute;-webkit-text-stroke:0.1px #262626;top:697.14px;font-size:11.5px;line-height:11.5px;color:#262626;letter-spacing:0.000px;font-weight:normal;white-space:nowrap;transform:scaleX(1.2181);right:482.80px;transform-origin:100% 0">5.29</div>
<div style="position:absolute;-webkit-text-stroke:0.1px #262626;top:697.14px;font-size:11.5px;line-height:11.5px;color:#262626;letter-spacing:0.000px;font-weight:normal;white-space:nowrap;transform:scaleX(1.2126);right:398.50px;transform-origin:100% 0">28.29</div>
<div style="position:absolute;-webkit-text-stroke:0.1px #262626;top:691.74px;font-size:11.5px;line-height:11.5px;color:#262626;letter-spacing:0.000px;font-weight:normal;white-space:nowrap;transform:scaleX(1.1769);left:641.10px;width:400px;text-align:center;transform-origin:50% 0">unpaid</div>
<div style="position:absolute;-webkit-text-stroke:0.1px #e8383a;top:701.84px;font-size:11.5px;line-height:11.5px;color:#e8383a;letter-spacing:0.000px;font-weight:normal;white-space:nowrap;transform:scaleX(1.1764);left:641.10px;width:400px;text-align:center;transform-origin:50% 0">overdue</div>
<svg style="position:absolute;left:1085px;top:688.175px" width="70" height="25" viewBox="0 0 70 25"><path d="M10.2 6.8 H16.2 L18.9 9.5 V16.6 H10.2Z" fill="#1f7b9a"/><path d="M15.5 6.6 V10.8 H19.2" stroke="#c4eef9" stroke-width="1.05" fill="none"/><circle cx="9.7" cy="13.2" r="3.6" fill="#d8f4fb"/><circle cx="9.7" cy="13.2" r="2.6" fill="#f4fbfd" stroke="#3b8a9c" stroke-width="1.3"/><path d="M7.9 15.3 L5.3 18.4" stroke="#2f7f96" stroke-width="1.8" stroke-linecap="round"/><path d="M25.3 17.8 L25.8 14.8 L32.4 8.2 Q33.8 7 35.0 8.3 Q36.1 9.6 34.9 10.9 L28.3 17.4Z" fill="#4296c2"/><path d="M27 16.2 L33.8 9.4" stroke="#9fd3ea" stroke-width=".8"/><path d="M43.9 7.8 V15.3 Q48 17.3 52.1 15.3 V7.8Z" fill="#2a7b9c"/><path d="M43.9 10.6 Q48 12.4 52.1 10.6 M43.9 13.2 Q48 15 52.1 13.2" stroke="#a6dcee" stroke-width=".8" fill="none"/><ellipse cx="48" cy="7.6" rx="4.1" ry="2" fill="#2f86a8" stroke="#a6dcee" stroke-width=".6"/><path d="M38.7 12.4 V16.6 Q42.7 18.8 46.8 16.6 V12.4Z" fill="#2a7b9c"/><path d="M38.7 14.8 Q42.7 16.8 46.8 14.8" stroke="#a6dcee" stroke-width=".8" fill="none"/><ellipse cx="42.75" cy="12.3" rx="4.1" ry="1.9" fill="#2f86a8" stroke="#a6dcee" stroke-width=".6"/><path d="M58.8 8.5 L65.2 14.2 M65.2 8.5 L58.8 14.2" stroke="#c0283e" stroke-width="1.8"/></svg>
<div style="position:absolute;-webkit-text-stroke:0px #111;top:747.24px;font-size:12px;line-height:12px;color:#111;letter-spacing:0.000px;font-weight:bold;white-space:nowrap;transform:scaleX(1.2088);left:-18.50px;width:400px;text-align:center;transform-origin:50% 0">TOTAL INVOICES per page</div>
<div style="position:absolute;-webkit-text-stroke:0px #111;top:772.75px;font-size:12px;line-height:12px;color:#111;letter-spacing:0.000px;font-weight:bold;white-space:nowrap;transform:scaleX(1.1954);left:-18.50px;width:400px;text-align:center;transform-origin:50% 0">TOTAL INVOICES</div>
<div style="position:absolute;-webkit-text-stroke:0px #111;top:747.24px;font-size:12px;line-height:12px;color:#111;letter-spacing:0.000px;font-weight:bold;white-space:nowrap;transform:scaleX(1.2810);right:565.30px;transform-origin:100% 0">762.00</div>
<div style="position:absolute;-webkit-text-stroke:0px #111;top:747.24px;font-size:12px;line-height:12px;color:#111;letter-spacing:0.000px;font-weight:bold;white-space:nowrap;transform:scaleX(1.2810);right:482.30px;transform-origin:100% 0">123.23</div>
<div style="position:absolute;-webkit-text-stroke:0px #111;top:747.24px;font-size:12px;line-height:12px;color:#111;letter-spacing:0.000px;font-weight:bold;white-space:nowrap;transform:scaleX(1.2810);right:398.70px;transform-origin:100% 0">885.23</div>
<div style="position:absolute;-webkit-text-stroke:0px #111;top:772.55px;font-size:12px;line-height:12px;color:#111;letter-spacing:0.000px;font-weight:bold;white-space:nowrap;transform:scaleX(1.2810);right:565.30px;transform-origin:100% 0">960.00</div>
<div style="position:absolute;-webkit-text-stroke:0px #111;top:772.55px;font-size:12px;line-height:12px;color:#111;letter-spacing:0.000px;font-weight:bold;white-space:nowrap;transform:scaleX(1.2810);right:482.30px;transform-origin:100% 0">168.77</div>
<div style="position:absolute;-webkit-text-stroke:0px #111;top:772.55px;font-size:12px;line-height:12px;color:#111;letter-spacing:0.000px;font-weight:bold;white-space:nowrap;transform:scaleX(1.3004);right:398.70px;transform-origin:100% 0">1128.77</div>
<div style="position:absolute;-webkit-text-stroke:0.25px #3a3a3a;top:809.27px;font-size:11.5px;line-height:11.5px;color:#3a3a3a;letter-spacing:0.000px;font-weight:normal;white-space:nowrap;transform:scaleX(1.2132);left:49px;transform-origin:0 0">Results per page :</div>
<div style="position:absolute;left:179px;top:805px;width:40px;height:15px;border:1px solid #c0c8d0;background:#fff;box-shadow:inset 1px 1px 0 #e4e4e4"></div>
<div style="position:absolute;-webkit-text-stroke:0.25px #3f91bf;top:809.57px;font-size:11.5px;line-height:11.5px;color:#3f91bf;letter-spacing:0.000px;font-weight:normal;white-space:nowrap;transform:scaleX(1.1933);left:184px;transform-origin:0 0">15</div>
<div style="position:absolute;left:233px;top:803px;width:65px;height:21px;border:1px solid #9a9a9a;border-radius:3px;background:linear-gradient(#fbfbfb,#f0f0f0 45%,#e0e0e0 55%,#d8d8d8)"></div>
<div style="position:absolute;-webkit-text-stroke:0.25px #333;top:809.57px;font-size:11.5px;line-height:11.5px;color:#333;letter-spacing:0.000px;font-weight:normal;white-space:nowrap;transform:scaleX(1.1663);left:249.3px;transform-origin:0 0">Apply</div>
<div style="position:absolute;left:144px;top:178px;width:361px;height:89px;border:1px solid #1a1a1a;background:#fff"></div>
<div style="position:absolute;left:145px;top:180px;width:361px;height:17px;background:#1597dc"></div>
<div style="position:absolute;-webkit-text-stroke:0.25px #fff;top:183.27px;font-size:11.5px;line-height:11.5px;color:#fff;letter-spacing:0.000px;font-weight:normal;white-space:nowrap;transform:scaleX(1.1568);left:147.4px;transform-origin:0 0">All</div>
<div style="position:absolute;-webkit-text-stroke:0.25px #4a98c4;top:201.57px;font-size:11.5px;line-height:11.5px;color:#4a98c4;letter-spacing:0.000px;font-weight:normal;white-space:nowrap;transform:scaleX(1.0954);left:147.4px;transform-origin:0 0">Paid</div>
<div style="position:absolute;-webkit-text-stroke:0.25px #4a98c4;top:219.17px;font-size:11.5px;line-height:11.5px;color:#4a98c4;letter-spacing:0.000px;font-weight:normal;white-space:nowrap;transform:scaleX(1.1479);left:147.4px;transform-origin:0 0">Unpaid</div>
<div style="position:absolute;-webkit-text-stroke:0.25px #4a98c4;top:236.77px;font-size:11.5px;line-height:11.5px;color:#4a98c4;letter-spacing:0.000px;font-weight:normal;white-space:nowrap;transform:scaleX(1.1685);left:147.4px;transform-origin:0 0">Partial</div>
<div style="position:absolute;-webkit-text-stroke:0.25px #4a98c4;top:254.37px;font-size:11.5px;line-height:11.5px;color:#4a98c4;letter-spacing:0.000px;font-weight:normal;white-space:nowrap;transform:scaleX(1.1573);left:147.4px;transform-origin:0 0">Overdue</div></body></html>
